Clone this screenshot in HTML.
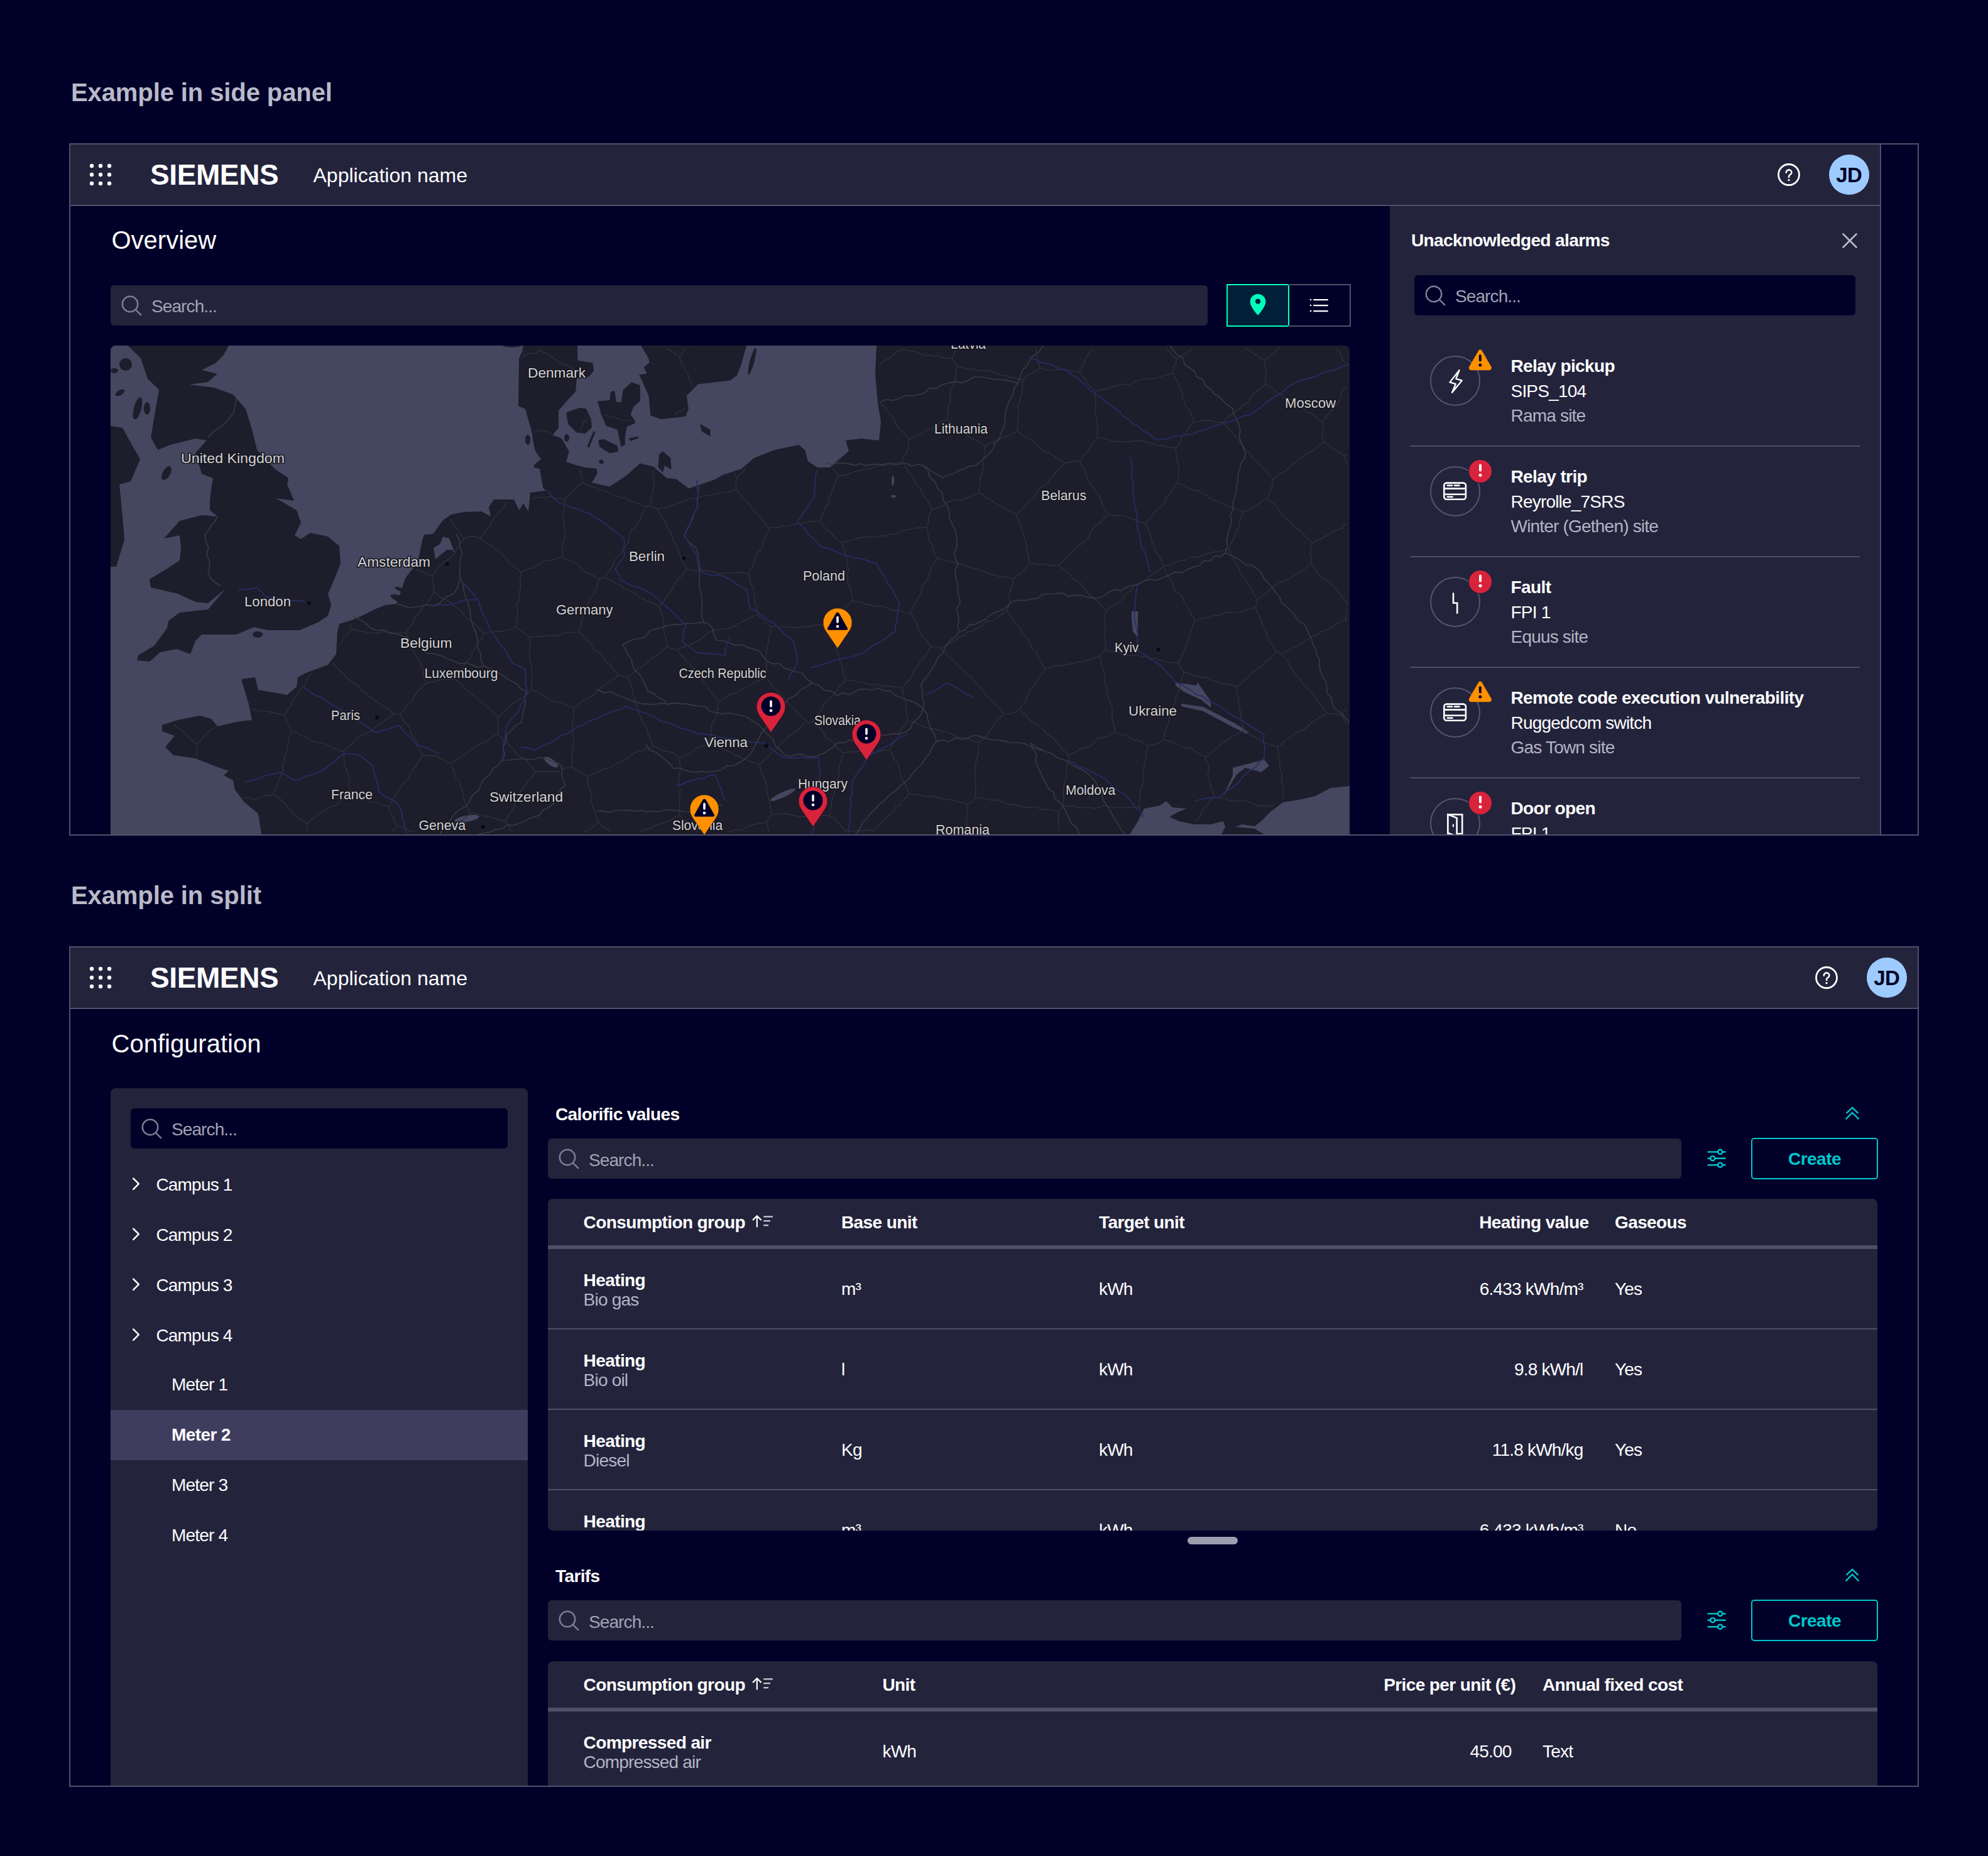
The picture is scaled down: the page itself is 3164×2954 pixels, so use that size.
<!DOCTYPE html>
<html><head><meta charset="utf-8"><title>iX examples</title>
<style>
html,body{margin:0;padding:0;background:#000028;}
body{width:3164px;height:2954px;position:relative;overflow:hidden;font-family:"Liberation Sans",sans-serif;}
.t{position:absolute;white-space:nowrap;}
.b{position:absolute;}
.frame{position:absolute;border:2px solid #50506c;overflow:hidden;background:#000028;}
.off{position:absolute;width:0;height:0;}
.clip{position:absolute;overflow:hidden;}
</style></head><body>
<div class="t" style="left:113.0px;top:126.6px;font-size:40px;line-height:40px;color:#b9b9c8;font-weight:700;letter-spacing:-0.1px;">Example in side panel</div><div class="t" style="left:113.0px;top:1404.6px;font-size:40px;line-height:40px;color:#b9b9c8;font-weight:700;letter-spacing:-0.1px;">Example in split</div><div class="frame" style="left:110px;top:228px;width:2940px;height:1098px;"><div class="off" style="left:-112px;top:-230px;"><div class="b" style="left:112.0px;top:230.0px;width:2880.0px;height:96.0px;background:#23233c;"></div><div class="b" style="left:112.0px;top:326.0px;width:2880.0px;height:2.0px;background:#50506c;"></div><svg class="b" style="left:141.9px;top:259.8px;" width="36" height="36" viewBox="0 0 36 36"><circle cx="4" cy="4" r="3.2" fill="#fff"/><circle cx="4" cy="18" r="3.2" fill="#fff"/><circle cx="4" cy="32" r="3.2" fill="#fff"/><circle cx="18" cy="4" r="3.2" fill="#fff"/><circle cx="18" cy="18" r="3.2" fill="#fff"/><circle cx="18" cy="32" r="3.2" fill="#fff"/><circle cx="32" cy="4" r="3.2" fill="#fff"/><circle cx="32" cy="18" r="3.2" fill="#fff"/><circle cx="32" cy="32" r="3.2" fill="#fff"/></svg><div class="t" style="left:239.0px;top:254.6px;font-size:46px;line-height:46px;color:#ffffff;font-weight:700;letter-spacing:-0.4px;">SIEMENS</div><div class="t" style="left:498.5px;top:263.2px;font-size:32px;line-height:32px;color:#ffffff;">Application name</div><div class="b" style="left:2911.0px;top:246.0px;width:64.0px;height:64.0px;background:#9dcbff;border-radius:50%;"></div><div class="t" style="left:2911.0px;top:262.1px;font-size:33px;line-height:33px;color:#000028;font-weight:700;letter-spacing:-0.6px;width:64px;text-align:center;text-indent:-0.6px;">JD</div><svg class="b" style="left:2825.3px;top:256.0px;" width="44" height="44" viewBox="0 0 44 44"><circle cx="22" cy="22" r="16.5" fill="none" stroke="#fff" stroke-width="2.8"/><path d="M17.8 18.8c0-2.6 1.9-4.4 4.3-4.4s4.3 1.8 4.3 4c0 2.1-1.4 2.9-2.7 3.9-1 .7-1.6 1.3-1.6 2.6v1.1" fill="none" stroke="#fff" stroke-width="2.6" stroke-linecap="round"/><circle cx="22" cy="30.6" r="1.7" fill="#fff"/></svg><div class="b" style="left:2992.0px;top:230.0px;width:2.0px;height:1100.0px;background:#50506c;"></div><div class="t" style="left:177.5px;top:362.2px;font-size:40px;line-height:40px;color:#ffffff;">Overview</div><div class="b" style="left:176.0px;top:454.0px;width:1746.0px;height:64.0px;background:#23233c;border-radius:6px;"></div><svg class="b" style="left:186.5px;top:464.0px;" width="40" height="40" viewBox="0 0 40 40"><circle cx="20" cy="20" r="12.2" fill="none" stroke="#7c7c92" stroke-width="2.6"/><line x1="28.8" y1="28.8" x2="37.2" y2="37.2" stroke="#7c7c92" stroke-width="2.6" stroke-linecap="round"/></svg><div class="t" style="left:241.0px;top:474.3px;font-size:28px;line-height:28px;color:#a3a3b4;letter-spacing:-0.9px;">Search...</div><div class="b" style="left:1952.0px;top:452.0px;width:100.0px;height:68.0px;background:#001f39;border:2px solid #00ffb9;box-sizing:border-box;"></div><div class="b" style="left:2050.0px;top:452.0px;width:100.0px;height:68.0px;border:2px solid #50506c;border-left:none;box-sizing:border-box;"></div><svg class="b" style="left:1980.0px;top:462.0px;" width="44" height="48" viewBox="0 0 44 48"><path d="M22 6c-7 0-12.4 5.4-12.4 12.2 0 7.6 10.6 19.6 12.4 21.6 1.8-2 12.4-14 12.4-21.6C34.4 11.4 29 6 22 6z" fill="#00ffb9"/><circle cx="22" cy="17.6" r="4.2" fill="#001f39"/></svg><svg class="b" style="left:2080.0px;top:470.0px;" width="40" height="32" viewBox="0 0 40 32"><g fill="#fff"><circle cx="6" cy="7" r="1.3"/><circle cx="6" cy="16" r="1.3"/><circle cx="6" cy="25" r="1.3"/><rect x="10" y="6" width="24" height="2.2" rx="1.1"/><rect x="10" y="15" width="24" height="2.2" rx="1.1"/><rect x="10" y="24" width="24" height="2.2" rx="1.1"/></g></svg><div class="b" style="left:176px;top:550px;width:1972px;height:780px;border-radius:8px 8px 0 0;overflow:hidden;"><svg width="1972" height="780" viewBox="176 550 1972 780" style="display:block"><rect x="176" y="550" width="1972" height="780" fill="#1e1d2b"/><path d="M176,550 L833,550 L831,560 L826,570 L825,646 L836,651 L846,686 L851,716 L861,731 L851,739 L849,744 L859,746 L864,776 L869,781 L844,784 L841,814 L833,801 L826,812 L818,795 L786,795 L778,807 L781,822 L766,814 L738,815 L718,819 L704,829 L690,849 L687,850 L675,851 L672,860 L666,890 L657,905 L645,920 L641,933 L631,961 L613,963 L598,969 L578,979 L560,987 L540,993 L537,1005 L535,1041 L522,1058 L487,1071 L474,1078 L472,1093 L457,1106 L411,1098 L406,1078 L384,1081 L396,1121 L401,1146 L376,1149 L346,1156 L336,1144 L318,1139 L283,1146 L258,1154 L258,1164 L278,1171 L263,1189 L276,1202 L311,1207 L341,1219 L364,1227 L356,1234 L371,1242 L374,1257 L389,1277 L411,1295 L416,1328 L176,1328Z" fill="#45465f"/><path d="M203,550 L364,550 L356,565 L343,578 L321,589 L346,595 L331,608 L301,612 L341,617 L371,628 L391,651 L401,683 L409,716 L437,746 L459,761 L457,771 L468,797 L439,793 L472,812 L479,832 L469,852 L479,858 L494,848 L522,854 L540,869 L542,897 L532,922 L522,945 L527,963 L522,980 L507,990 L477,1003 L427,1003 L404,998 L376,1010 L354,1010 L321,1010 L311,1020 L303,1041 L281,1033 L255,1038 L238,1053 L218,1051 L220,1043 L245,1028 L266,1000 L268,988 L286,975 L331,970 L359,937 L331,960 L311,958 L283,945 L240,935 L238,922 L266,905 L286,892 L288,872 L286,852 L261,857 L286,829 L321,820 L346,822 L334,812 L334,797 L336,779 L339,761 L321,754 L311,721 L329,701 L311,698 L271,708 L251,716 L240,696 L253,620 L235,603 L224,570Z" fill="#1e1d2b"/><path d="M176,678 L195,681 L210,708 L223,731 L208,766 L190,771 L195,822 L198,859 L185,902 L176,902Z" fill="#1e1d2b"/><ellipse cx="265" cy="753" rx="6" ry="12" transform="rotate(30 265 753)" fill="#1e1d2b"/><ellipse cx="410" cy="1010" rx="8" ry="5" transform="rotate(0 410 1010)" fill="#1e1d2b"/><ellipse cx="200" cy="580" rx="10" ry="10" transform="rotate(0 200 580)" fill="#1e1d2b"/><ellipse cx="219" cy="650" rx="6" ry="18" transform="rotate(15 219 650)" fill="#1e1d2b"/><ellipse cx="234" cy="650" rx="5" ry="10" transform="rotate(0 234 650)" fill="#1e1d2b"/><ellipse cx="191" cy="625" rx="8" ry="4" transform="rotate(-30 191 625)" fill="#1e1d2b"/><ellipse cx="182" cy="590" rx="6" ry="4" transform="rotate(0 182 590)" fill="#1e1d2b"/><ellipse cx="636" cy="953" rx="15" ry="5" transform="rotate(20 636 953)" fill="#1e1d2b"/><ellipse cx="637" cy="938" rx="9" ry="3" transform="rotate(20 637 938)" fill="#1e1d2b"/><ellipse cx="815" cy="547" rx="18" ry="6" transform="rotate(0 815 547)" fill="#1e1d2b"/><ellipse cx="840" cy="700" rx="4" ry="8" transform="rotate(0 840 700)" fill="#1e1d2b"/><path d="M919,550 L1395,550 L1393,595 L1397,641 L1402,671 L1399,701 L1371,698 L1346,701 L1351,718 L1341,726 L1321,744 L1301,744 L1286,734 L1281,716 L1271,708 L1233,716 L1200,729 L1180,746 L1150,756 L1136.5,763.8 L1095.8,777.4 L1076.2,762.3 L1061,760.8 L1040,742.7 L1018.8,737.4 L997.7,756.3 L970.5,774.4 L941.9,768.3 L950.9,753.2 L949.4,745.7 L932.8,744.2 L914.7,739.7 L901.1,735.1 L905.7,718.5 L893.6,697.4 L880,693 L880,691.4 L889,680.8 L889,653.6 L905.7,634 L916.2,623.5 L917.7,602.3 L937.3,599.3 L945,590.3 L943.4,577.4 L919.2,573.7Z" fill="#45465f"/><path d="M1020.3,550.3 L1032.4,570.7 L1034,576.7 L1024.9,584.2 L1029.4,594.8 L1017.3,596.3 L1032.4,629.5 L1035.4,661.2 L1052,667.2 L1091.3,662.7 L1095.8,650.6 L1092.8,629.5 L1110.9,611.4 L1162.2,605.4 L1172.7,597.8 L1180,579.7 L1188,550Z" fill="#1e1d2b"/><path d="M901.1,656.7 L922.3,649.1 L932.8,650.6 L940.4,665.7 L941.9,680.8 L931.3,689.9 L917.7,688.4 L904.1,674.8Z" fill="#1e1d2b"/><path d="M950.9,638.6 L970.5,637 L972,623.5 L978.1,622 L981.1,640.1 L988.6,640.1 L991.7,620.4 L1005.2,608.4 L1018.8,612.9 L1018.8,638.6 L1008.3,647.6 L1003.7,659.7 L1009.8,668.7 L1011.3,673.3 L997.7,679.3 L994.7,695.9 L994.7,708 L988.6,711 L982.6,683.8 L964.5,677.8 L957,659.7Z" fill="#1e1d2b"/><path d="M952.4,700.4 L961.5,698.9 L982.6,709.5 L984.1,718.5 L970.5,721.5 L953.9,711Z" fill="#1e1d2b"/><path d="M1000.7,697.4 L1015.8,694.4 L1015.8,697.4 L1003.7,701.9Z" fill="#1e1d2b"/><path d="M1113.9,674.8 L1130.5,683.8 L1130.5,694.4 L1116.9,686.8Z" fill="#1e1d2b"/><path d="M1049,723 L1055,718.5 L1067.1,729.1 L1068.6,747.2 L1058,741.2 L1055,751.7 L1047.5,744.2Z" fill="#1e1d2b"/><path d="M944.5,686 L947.5,688 L937.5,713 L934.5,711Z" fill="#1e1d2b"/><ellipse cx="1197" cy="575" rx="3.5" ry="22" transform="rotate(15 1197 575)" fill="#1e1d2b"/><ellipse cx="902" cy="697" rx="4" ry="6" transform="rotate(0 902 697)" fill="#1e1d2b"/><ellipse cx="957" cy="735" rx="4" ry="3" transform="rotate(20 957 735)" fill="#1e1d2b"/><path d="M693,890 L711,875 L720,875 L725,883 L715,857 L705,854 L700,866 L690,872Z" fill="#45465f"/><path d="M1798,1328 L1811,1307 L1821,1287 L1846,1282 L1856,1275 L1866,1285 L1889,1287 L1901,1282 L1876,1292 L1861,1300 L1876,1307 L1901,1312 L1927,1312 L1947,1307 L1952,1322 L1977,1312 L1997,1315 L2007,1307 L2022,1292 L2042,1277 L2072,1272 L2093,1267 L2118,1254 L2148,1251 L2148,1328Z" fill="#45465f"/><path d="M1944,1328 L1950,1316 L1977,1317 L1997,1319 L2012,1328Z" fill="#1e1d2b"/><path d="M1801,973 L1811,973 L1811,1015 L1803,1005 L1801,985Z" fill="#45465f"/><path d="M1871,1086 L1904,1091 L1906,1086 L1927,1116 L1927,1126 L1912,1114 L1884,1101 L1871,1091Z" fill="#45465f"/><path d="M1962,1222 L2012,1209 L2020,1219 L2007,1229 L1982,1222 L1969,1232 L1947,1267 L1962,1234Z" fill="#45465f"/><path d="M1880,1120 L1915,1125 L1963,1150 L1988,1165 L1984,1168 L1958,1155 L1915,1132 L1880,1124Z" fill="#45465f"/><ellipse cx="1246" cy="1265" rx="22" ry="4" transform="rotate(-25 1246 1265)" fill="#45465f"/><ellipse cx="743" cy="1303" rx="20" ry="5" transform="rotate(-10 743 1303)" fill="#45465f"/><ellipse cx="1421" cy="765" rx="2" ry="8" transform="rotate(0 1421 765)" fill="#45465f"/><ellipse cx="1422" cy="790" rx="4" ry="2" transform="rotate(0 1422 790)" fill="#45465f"/><ellipse cx="877" cy="1213" rx="13" ry="5" transform="rotate(35 877 1213)" fill="#45465f"/><g fill="none" stroke="#30313c" stroke-width="1.4" stroke-linejoin="round"><path d="M1081.3,567.5 L1083.5,575.1 L1087.5,581.9 L1089.9,589.4 L1095.2,595.6 L1096.2,603.7 L1100.9,610.2 L1102.0,614.6"/><path d="M1081.3,567.5 L1086.1,562.0 L1090.6,556.4 L1093.1,554.2"/><path d="M631.5,1314.3 L627.6,1320.2 L625.1,1324.0"/><path d="M631.5,1314.3 L628.0,1307.0 L625.2,1299.3 L621.0,1292.3 L618.7,1284.4"/><path d="M618.7,1284.4 L612.0,1281.9 L605.5,1279.1 L598.8,1276.6 L591.1,1277.0 L585.1,1272.5 L578.9,1268.6 L571.8,1267.4 L564.7,1266.2 L558.0,1263.8"/><path d="M558.0,1263.8 L551.8,1268.2 L545.3,1272.3 L539.6,1277.5 L533.7,1282.3 L525.9,1284.4 L519.3,1288.3 L512.5,1291.9 L506.4,1296.4 L500.6,1301.4 L494.6,1306.1 L488.7,1311.1"/><path d="M488.7,1311.1 L489.2,1318.2 L489.3,1324.0"/><path d="M660.1,1324.0 L659.4,1323.4 L651.7,1323.2 L645.6,1318.4 L638.6,1316.3 L631.5,1314.3"/><path d="M672.8,1201.6 L669.4,1195.1 L665.0,1189.1 L662.5,1182.0 L660.7,1174.5 L654.9,1169.3 L653.0,1161.9 L649.8,1155.2 L644.3,1149.8 L640.2,1143.6 L636.6,1137.2"/><path d="M672.8,1201.6 L669.0,1207.6 L664.8,1213.3 L661.9,1219.8 L656.6,1224.8 L653.3,1231.1 L650.7,1237.8 L645.3,1242.7 L641.0,1248.4 L637.2,1254.3 L633.0,1260.0 L629.8,1266.4 L625.3,1271.9 L622.6,1278.5 L618.7,1284.4"/><path d="M636.6,1137.2 L631.8,1136.9 L627.1,1136.6"/><path d="M546.3,1196.0 L551.8,1191.3 L557.3,1186.8 L562.2,1181.4 L567.2,1176.1 L572.3,1170.9 L579.9,1169.1 L586.0,1165.3 L593.1,1162.9 L597.7,1157.1 L603.6,1153.1 L609.5,1149.0 L615.2,1144.7 L621.0,1140.4 L627.1,1136.6"/><path d="M546.3,1196.0 L547.5,1203.5 L547.3,1211.3 L548.9,1218.8 L552.0,1226.0 L554.4,1233.4 L556.5,1240.8 L555.3,1248.7 L557.4,1256.1 L558.0,1263.8"/><path d="M435.5,1264.4 L437.7,1257.6 L440.3,1251.1 L443.1,1244.5 L445.5,1237.9 L448.5,1231.4 L450.9,1224.8 L449.9,1217.2 L453.3,1210.8 L452.8,1203.4 L455.8,1196.9 L457.6,1190.1 L458.6,1183.1 L459.7,1176.1 L461.9,1169.4 L463.9,1162.6"/><path d="M435.5,1264.4 L441.0,1268.9 L447.1,1272.7 L452.0,1277.9 L457.1,1282.8 L461.2,1288.9 L465.4,1294.8 L471.1,1299.1 L476.5,1303.6 L483.1,1306.8 L488.7,1311.1"/><path d="M546.3,1196.0 L539.2,1193.8 L532.2,1191.3 L525.3,1188.6 L519.1,1184.2 L511.9,1182.2 L504.1,1181.8 L496.9,1179.8 L490.9,1174.9 L484.0,1172.2 L477.2,1169.3 L470.9,1165.2 L463.9,1162.6"/><path d="M672.8,1201.6 L680.6,1202.5 L688.5,1202.8 L696.3,1203.8 L703.1,1207.9 L709.8,1212.2 L717.0,1214.9"/><path d="M708.9,1324.0 L711.8,1321.7 L718.0,1317.2 L722.9,1311.2 L730.5,1308.5 L737.1,1304.6 L742.7,1299.5 L748.2,1294.1"/><path d="M717.0,1214.9 L719.5,1221.6 L723.0,1227.8 L723.9,1235.1 L728.5,1240.9 L732.7,1246.8 L733.6,1254.1 L736.4,1260.6 L737.5,1267.8 L739.4,1274.7 L741.9,1281.3 L745.1,1287.7 L748.2,1294.1"/><path d="M627.1,1136.6 L621.8,1131.7 L616.1,1127.2 L609.9,1123.5 L603.9,1119.4 L597.8,1115.4 L592.2,1110.8 L585.8,1107.2 L581.1,1101.5 L574.4,1098.3 L570.3,1092.0 L564.6,1087.5 L558.3,1083.8 L552.4,1079.6 L548.1,1073.5 L542.3,1069.1 L537.6,1063.5 L532.4,1058.4 L528.9,1055.6"/><path d="M463.9,1162.6 L459.5,1154.8 L455.8,1146.7 L452.7,1138.3"/><path d="M452.7,1138.3 L456.4,1131.9 L461.0,1126.2 L464.0,1119.3 L466.9,1112.5 L472.4,1107.3 L475.9,1100.8 L479.9,1094.7 L485.7,1089.8 L488.3,1082.7 L491.3,1075.8 L496.5,1071.7"/><path d="M2039.3,1040.6 L2045.9,1037.7 L2052.0,1033.5 L2058.4,1030.1 L2065.5,1028.0 L2071.8,1024.3 L2077.8,1020.1 L2083.8,1016.0 L2089.7,1011.5 L2097.5,1010.7 L2102.9,1005.3 L2109.8,1002.9 L2117.0,1000.8 L2122.6,996.0 L2128.7,992.0 L2135.3,988.8 L2141.9,985.8"/><path d="M2039.3,1040.6 L2044.0,1046.4 L2048.7,1052.1 L2052.1,1058.9 L2056.1,1065.2 L2060.3,1071.3 L2065.0,1077.1 L2070.3,1082.4 L2073.6,1089.2 L2080.1,1093.5 L2084.3,1099.7 L2089.6,1105.0 L2094.2,1110.8 L2097.4,1117.7 L2103.2,1122.7 L2107.4,1128.8 L2112.0,1134.7"/><path d="M2134.5,1138.2 L2127.1,1136.5 L2119.4,1136.3 L2112.0,1134.7"/><path d="M2134.5,1138.2 L2138.9,1132.6 L2144.0,1127.9"/><path d="M2144.0,988.5 L2141.9,985.8"/><path d="M2144.0,1155.3 L2142.0,1152.0 L2138.9,1144.7 L2134.5,1138.2"/><path d="M1059.1,554.2 L1063.1,555.8 L1069.5,559.0 L1075.3,563.5 L1081.3,567.5"/><path d="M1187.6,744.8 L1187.5,744.9 L1183.1,750.4 L1177.6,755.0 L1172.9,760.3"/><path d="M1168.8,753.9 L1169.0,754.3 L1172.9,760.3"/><path d="M1224.1,841.0 L1231.5,839.3 L1239.1,839.5 L1246.3,837.1 L1254.0,837.9 L1261.1,834.9 L1268.5,833.8 L1276.0,833.2 L1283.3,830.9 L1290.7,829.9 L1298.3,830.0 L1305.7,829.2"/><path d="M1224.1,841.0 L1219.7,835.2 L1215.3,829.2 L1209.8,824.3 L1205.8,818.1 L1200.1,813.3 L1195.4,807.6 L1192.3,800.6 L1186.1,796.3 L1180.2,791.7 L1176.5,785.2 L1171.7,779.7"/><path d="M1325.1,745.7 L1325.3,745.9 L1330.5,751.6 L1333.6,758.2"/><path d="M1333.6,758.2 L1330.9,765.3 L1328.3,772.5 L1324.4,779.1 L1322.6,786.7 L1318.7,793.3 L1318.6,801.5 L1313.7,807.8 L1310.7,814.8 L1307.9,821.9 L1305.7,829.2"/><path d="M1171.7,779.7 L1171.0,769.9 L1172.9,760.3"/><path d="M1435.9,554.0 L1436.1,555.7"/><path d="M1436.1,555.7 L1429.7,558.9 L1423.6,562.7 L1418.2,567.6 L1412.5,572.0 L1406.1,575.2 L1400.6,579.9 L1397.6,580.8"/><path d="M770.4,1008.1 L767.1,1014.5 L763.0,1020.4 L759.1,1026.4 L755.3,1032.5 L752.1,1038.9 L749.3,1045.7 L745.0,1051.4 L739.3,1056.3 L736.9,1063.3 L732.4,1068.9 L728.6,1075.0 L724.1,1080.6"/><path d="M770.4,1008.1 L764.8,1003.2 L759.7,997.7 L754.7,992.1 L748.8,987.5 L742.8,983.1 L737.5,977.8 L732.9,971.7 L726.9,967.3 L721.3,962.3 L715.5,957.7 L708.5,954.4 L701.7,950.9 L695.8,946.4 L690.5,941.2"/><path d="M646.2,1007.1 L649.0,1013.8 L651.7,1020.5 L655.8,1026.6 L656.2,1034.3 L660.1,1040.5 L663.9,1046.8 L668.3,1052.8 L670.8,1059.6 L673.2,1066.5 L673.8,1074.0 L675.8,1081.0 L678.6,1087.7"/><path d="M646.2,1007.1 L649.9,1000.8 L654.5,995.2 L657.9,988.8 L660.6,981.9 L665.8,976.8 L670.2,971.0 L673.8,964.7 L679.7,960.0 L684.0,954.2 L687.5,947.9 L690.5,941.2"/><path d="M678.6,1087.7 L685.9,1084.6 L693.7,1084.8 L700.9,1081.3 L708.5,1080.5 L716.4,1081.1 L724.1,1080.6"/><path d="M636.6,1137.2 L641.4,1131.8 L645.5,1125.8 L648.9,1119.3 L656.0,1115.8 L658.6,1108.5 L663.2,1103.0 L667.7,1097.3 L673.3,1092.6 L678.6,1087.7"/><path d="M558.7,1001.6 L554.3,1007.9 L549.1,1013.4 L544.7,1019.7 L540.8,1026.3 L539.8,1027.1"/><path d="M558.7,1001.6 L566.0,1002.8 L573.2,1004.1 L580.4,1005.6 L587.7,1007.5 L595.0,1007.6 L602.3,1007.7 L609.8,1005.1 L617.0,1006.1 L624.3,1007.1 L631.6,1007.4 L638.9,1007.1 L646.2,1007.1"/><path d="M557.7,991.9 L557.9,994.4 L558.7,1001.6"/><path d="M687.7,916.4 L680.8,914.0 L674.0,910.8 L667.1,908.2 L661.3,905.6"/><path d="M687.7,916.4 L689.3,924.6 L690.2,932.9 L690.5,941.2"/><path d="M843.3,1014.6 L836.7,1008.4 L828.5,1004.0 L821.8,997.9"/><path d="M843.3,1014.6 L844.2,1022.1 L843.3,1029.7 L842.8,1037.2 L842.5,1044.8 L844.0,1052.2 L845.7,1059.7 L846.3,1067.2 L846.7,1074.7 L846.1,1082.3 L846.3,1089.8 L846.6,1097.3"/><path d="M821.8,997.9 L814.6,1000.3 L807.4,1002.3 L800.2,1004.7 L792.6,1004.6 L785.1,1005.4 L777.7,1006.4 L770.4,1008.1"/><path d="M724.1,1080.6 L729.4,1085.3 L734.8,1089.9 L739.7,1095.0 L744.5,1100.2 L750.2,1104.4 L755.5,1109.2 L761.1,1113.4 L766.8,1117.7 L772.3,1122.2 L777.5,1127.0 L782.7,1131.7 L787.7,1136.8 L793.1,1141.4"/><path d="M846.6,1097.3 L840.9,1102.5 L835.7,1108.3 L828.5,1111.6 L822.5,1116.5 L815.5,1120.1 L810.6,1126.4 L804.3,1130.8 L798.4,1135.8 L793.1,1141.4"/><path d="M717.0,1214.9 L723.2,1210.9 L729.9,1207.8 L735.1,1202.3 L742.5,1200.2 L747.3,1194.1 L754.1,1191.0 L759.6,1186.0 L766.2,1182.7 L773.6,1180.6 L779.0,1175.4 L785.6,1172.2 L791.7,1168.0"/><path d="M793.1,1141.4 L792.0,1150.2 L793.9,1159.2 L791.7,1168.0"/><path d="M314.1,1184.2 L312.9,1191.9 L313.0,1199.7 L312.8,1203.4"/><path d="M314.1,1184.2 L308.1,1179.9 L302.5,1175.2 L297.2,1170.1 L292.2,1164.5 L285.9,1160.7 L280.1,1156.2 L276.2,1152.4"/><path d="M342.4,1158.0 L342.0,1158.2 L334.7,1161.7 L329.8,1167.6 L323.8,1172.3 L319.1,1178.4 L314.1,1184.2"/><path d="M401.5,1128.3 L402.5,1128.5 L409.5,1130.9 L416.7,1131.9 L424.1,1132.0 L431.3,1133.5 L438.4,1135.2 L445.7,1136.2 L452.7,1138.3"/><path d="M435.5,1264.4 L428.2,1265.7 L420.9,1266.8 L413.9,1269.9 L406.7,1272.2 L399.0,1270.9 L391.3,1269.8 L388.5,1269.7"/><path d="M1224.1,841.0 L1221.7,847.9 L1218.3,854.2 L1214.8,860.6 L1213.6,867.9 L1211.3,874.8 L1205.3,880.0 L1201.4,886.1 L1201.0,893.8 L1198.4,900.6 L1194.7,906.8 L1191.5,913.3"/><path d="M1226.4,996.7 L1220.4,992.9 L1216.1,987.3 L1210.6,982.8 L1206.1,977.3"/><path d="M1226.4,996.7 L1233.7,997.4 L1240.9,998.4 L1248.1,997.2 L1255.3,998.3 L1262.5,998.7 L1269.8,999.2 L1276.9,997.4 L1284.1,997.5 L1291.3,997.2 L1298.5,994.5 L1305.7,994.3 L1312.9,994.3 L1320.1,994.6"/><path d="M1191.5,913.3 L1193.2,920.4 L1194.1,927.7 L1198.0,934.3 L1199.8,941.3 L1201.5,948.4 L1200.8,956.1 L1203.2,963.0 L1203.8,970.4 L1206.1,977.3"/><path d="M1340.2,863.8 L1333.5,859.0 L1327.2,853.8 L1321.9,847.6 L1315.1,842.9 L1310.0,836.5 L1305.7,829.2"/><path d="M1340.2,863.8 L1342.2,870.8 L1344.3,877.8 L1347.0,884.7 L1348.0,891.8 L1348.9,899.1 L1350.8,906.1 L1349.0,913.8 L1349.0,921.2 L1349.4,928.5 L1352.6,935.2 L1355.1,942.2 L1356.1,949.4 L1357.8,956.4"/><path d="M1357.8,956.4 L1351.5,961.0 L1346.3,966.6 L1339.3,970.5 L1335.8,977.8 L1330.2,983.0 L1324.5,988.1 L1320.1,994.6"/><path d="M1812.7,1285.1 L1805.6,1285.3 L1798.5,1284.9 L1791.4,1285.1 L1784.3,1285.9 L1777.2,1285.3 L1770.1,1284.5 L1763.0,1283.6 L1755.9,1282.2 L1748.7,1285.3 L1741.6,1286.6 L1734.5,1284.6 L1727.4,1285.3 L1720.2,1285.7 L1713.2,1284.2 L1706.1,1282.7 L1698.9,1283.4 L1691.8,1283.1"/><path d="M1812.7,1285.1 L1813.4,1278.0 L1814.4,1270.9 L1814.0,1263.7 L1814.7,1256.6 L1818.2,1250.0 L1820.3,1243.1 L1819.2,1235.8 L1818.5,1228.5 L1820.5,1221.6 L1821.6,1214.6 L1823.6,1207.7 L1824.0,1200.6 L1825.7,1193.6 L1826.9,1186.6"/><path d="M1826.9,1186.6 L1819.7,1183.2 L1813.0,1178.7 L1804.7,1178.0 L1797.8,1173.9 L1791.2,1169.4 L1782.8,1168.7 L1775.6,1165.4"/><path d="M1775.6,1165.4 L1768.5,1168.0 L1762.2,1172.3 L1754.5,1173.8 L1746.9,1175.5 L1741.7,1182.1 L1736.0,1187.5 L1728.5,1189.3 L1721.0,1191.2 L1714.4,1194.9 L1707.8,1198.5 L1700.9,1201.6"/><path d="M1700.9,1201.6 L1700.5,1209.1 L1698.4,1216.3 L1696.5,1223.6 L1697.7,1231.2 L1696.8,1238.6 L1694.5,1245.9 L1693.0,1253.2 L1692.5,1260.6 L1692.8,1268.2 L1692.7,1275.7 L1691.8,1283.1"/><path d="M1815.9,1288.3 L1812.7,1285.1"/><path d="M1686.0,1324.0 L1685.2,1320.2 L1684.4,1313.1 L1684.8,1305.9 L1684.5,1298.8 L1684.5,1291.6"/><path d="M1684.5,1291.6 L1688.5,1287.7 L1691.8,1283.1"/><path d="M1622.7,1128.8 L1626.7,1122.3 L1632.0,1116.6 L1634.9,1109.4 L1638.3,1102.5 L1641.2,1095.3 L1646.9,1089.8 L1650.9,1083.3 L1654.7,1076.6 L1659.7,1070.8 L1663.4,1064.1"/><path d="M1622.7,1128.8 L1627.9,1133.7 L1633.2,1138.4 L1637.6,1144.1 L1643.1,1148.7 L1649.4,1152.4 L1654.8,1157.0 L1660.5,1161.4 L1664.9,1167.0 L1670.4,1171.6 L1676.7,1175.3 L1681.2,1180.9 L1686.2,1186.1 L1690.5,1191.9 L1695.6,1196.9 L1700.9,1201.6"/><path d="M1663.4,1064.1 L1670.6,1062.2 L1677.7,1059.8 L1685.3,1059.8 L1692.7,1058.7 L1700.0,1057.2 L1707.4,1056.2 L1714.4,1053.7 L1722.0,1053.5 L1729.1,1051.5 L1736.3,1049.4 L1743.2,1046.5 L1750.2,1043.9"/><path d="M1750.2,1043.9 L1752.2,1050.9 L1753.0,1058.3 L1755.6,1065.2 L1758.2,1072.1 L1758.1,1079.6 L1758.1,1087.0 L1761.8,1093.7 L1760.7,1101.4 L1763.6,1108.3 L1765.6,1115.3 L1768.8,1122.1 L1770.3,1129.2 L1770.0,1136.7 L1770.1,1144.2 L1772.3,1151.2 L1773.7,1158.3 L1775.6,1165.4"/><path d="M1622.7,1128.8 L1614.9,1133.3 L1606.7,1136.4 L1597.5,1135.9"/><path d="M1597.5,1135.9 L1592.3,1141.3 L1586.8,1146.4 L1581.9,1152.0 L1579.2,1159.5 L1573.8,1164.8 L1570.2,1171.4 L1563.5,1175.6 L1558.9,1181.5"/><path d="M1684.5,1291.6 L1677.5,1290.7 L1670.6,1288.8 L1663.5,1288.5 L1656.4,1287.7 L1649.8,1284.5 L1642.6,1284.5 L1635.3,1285.3 L1628.3,1284.0 L1621.4,1282.4 L1614.4,1280.8 L1607.3,1280.8 L1600.5,1278.2 L1593.8,1275.5 L1587.0,1273.0 L1579.6,1274.3 L1572.8,1272.2 L1565.8,1270.6 L1558.8,1269.7 L1551.7,1269.0"/><path d="M1551.7,1269.0 L1552.5,1261.8 L1553.1,1254.5 L1552.1,1247.0 L1551.3,1239.6 L1552.2,1232.3 L1552.5,1225.0 L1552.4,1217.7 L1553.9,1210.4 L1556.2,1203.3 L1556.6,1196.0 L1557.6,1188.7 L1558.9,1181.5"/><path d="M2027.4,1283.0 L2022.8,1282.4 L2015.6,1282.6 L2008.5,1282.3 L2001.3,1282.6 L1994.7,1279.1 L1987.9,1277.2 L1981.2,1274.0 L1974.1,1273.4 L1966.7,1275.2 L1959.7,1274.3 L1952.8,1272.4 L1945.9,1270.9 L1938.9,1269.8 L1932.0,1268.1"/><path d="M1932.0,1268.1 L1927.0,1273.3 L1923.1,1279.3 L1918.1,1284.6 L1913.4,1290.1 L1910.8,1297.2 L1907.3,1303.6 L1902.8,1308.0"/><path d="M2033.4,1188.3 L2034.5,1195.3 L2034.8,1202.4 L2036.0,1209.4 L2036.8,1216.4 L2037.2,1223.5 L2040.1,1230.3 L2040.7,1237.4 L2038.8,1244.7 L2041.8,1251.5 L2042.9,1258.5 L2042.1,1265.7 L2042.9,1272.7 L2042.9,1272.8"/><path d="M2033.4,1188.3 L2039.5,1184.3 L2044.9,1179.3 L2050.8,1175.0 L2057.1,1171.1 L2062.6,1166.3 L2069.7,1163.7 L2076.3,1160.3 L2082.0,1155.7 L2087.2,1150.3 L2093.2,1146.2 L2099.4,1142.2 L2106.1,1139.0 L2112.0,1134.7"/><path d="M1436.1,555.7 L1443.1,557.9 L1450.3,558.7 L1457.6,559.8 L1464.3,563.1 L1471.2,566.0 L1478.9,564.6 L1485.9,566.7 L1493.4,566.2 L1500.3,569.0 L1507.5,570.1 L1514.8,570.4"/><path d="M1522.1,554.0 L1520.4,557.5 L1517.6,564.0 L1514.8,570.4"/><path d="M1507.0,667.7 L1500.1,670.7 L1493.7,674.7 L1487.5,679.1 L1481.0,683.0 L1473.4,684.7 L1467.7,690.1 L1460.8,693.2 L1453.5,695.6 L1447.1,699.5"/><path d="M1507.0,667.7 L1512.9,672.3 L1518.5,677.1 L1524.2,681.9 L1529.3,687.6 L1536.4,690.3 L1542.3,694.8 L1548.3,699.2 L1555.3,701.9 L1561.9,705.5 L1567.9,709.7"/><path d="M1567.9,709.7 L1568.1,717.4 L1565.9,724.7 L1565.8,732.2 L1564.1,739.6 L1565.3,747.4 L1561.9,754.5 L1559.8,761.8 L1560.0,769.4 L1558.1,776.8 L1557.8,784.3"/><path d="M1435.5,734.7 L1439.9,740.8 L1443.7,747.3 L1447.5,753.8 L1453.1,759.1 L1455.5,766.6 L1459.9,772.7 L1465.6,777.9 L1467.9,785.4 L1472.3,791.5 L1476.4,797.8 L1480.4,804.2 L1483.7,811.0"/><path d="M1435.5,734.7 L1438.0,727.7 L1442.0,721.3 L1444.9,714.4 L1445.8,706.9 L1447.1,699.5"/><path d="M1557.8,784.3 L1551.3,787.4 L1544.5,789.8 L1538.1,793.1 L1531.6,796.0 L1523.8,795.6 L1516.6,796.8 L1509.6,798.4 L1503.6,802.9 L1497.4,806.8 L1490.5,808.7 L1483.7,811.0"/><path d="M1401.2,642.1 L1402.1,643.8 L1408.5,648.0 L1411.4,654.7 L1417.1,659.4 L1421.2,665.3 L1424.5,671.7 L1428.1,678.0 L1432.5,683.7 L1438.1,688.4 L1442.8,693.8 L1447.1,699.5"/><path d="M1514.8,570.4 L1519.3,576.8 L1523.1,583.7"/><path d="M1523.1,583.7 L1521.7,590.7 L1521.4,597.8 L1520.9,605.0 L1517.8,611.7 L1514.7,618.4 L1511.7,625.0 L1513.0,632.6 L1512.0,639.6 L1509.5,646.4 L1509.4,653.7 L1508.1,660.7 L1507.0,667.7"/><path d="M1333.6,758.2 L1341.0,756.7 L1348.4,755.7 L1355.3,752.6 L1362.4,749.8 L1369.8,748.9 L1376.8,745.9 L1384.6,746.5 L1391.5,743.4 L1398.5,740.4 L1406.2,740.6 L1413.8,740.2 L1420.9,737.9 L1428.2,736.2 L1435.5,734.7"/><path d="M1340.2,863.8 L1347.2,861.8 L1354.2,859.9 L1361.1,857.6 L1368.0,855.7 L1375.1,854.6 L1382.5,854.7 L1389.8,854.9 L1396.9,853.8 L1404.1,853.0 L1411.3,852.2 L1418.2,849.9 L1425.5,850.1 L1432.3,847.4 L1439.1,844.3 L1446.1,842.6 L1453.2,841.6 L1460.3,840.2 L1467.6,840.0 L1474.7,838.8"/><path d="M1474.7,838.8 L1477.5,832.1 L1477.8,824.5 L1479.4,817.3 L1483.7,811.0"/><path d="M860.8,554.0 L859.7,557.8"/><path d="M927.4,596.8 L926.7,596.4 L920.7,592.7 L914.2,589.8 L909.2,584.5 L902.8,581.5 L895.8,579.7 L889.4,576.6 L883.9,572.1 L878.4,567.6 L872.6,563.6 L866.1,560.9 L859.7,557.8"/><path d="M1191.5,913.3 L1184.5,912.2 L1177.5,911.0 L1170.4,911.4 L1163.3,912.0 L1156.3,911.6 L1149.1,912.9 L1142.0,912.9 L1135.2,909.7 L1128.2,908.1 L1121.2,907.7 L1114.1,908.3 L1107.0,908.6 L1100.0,907.2 L1093.0,906.5"/><path d="M1206.1,977.3 L1199.8,980.3 L1193.4,983.4 L1187.1,986.6 L1181.0,990.1 L1174.4,992.7 L1168.6,997.0 L1162.2,999.6 L1154.8,1000.4 L1147.6,1001.5 L1140.4,1002.5 L1133.7,1004.7 L1127.0,1007.0 L1121.4,1011.6 L1115.9,1016.8 L1109.8,1020.3 L1103.4,1023.3 L1097.2,1026.6 L1090.2,1028.3 L1083.8,1031.1 L1077.2,1033.6"/><path d="M1077.2,1033.6 L1069.3,1032.5 L1061.8,1029.8"/><path d="M1061.8,1029.8 L1061.6,1022.4 L1059.2,1015.5 L1057.1,1008.6 L1056.0,1001.4 L1056.9,993.8 L1055.4,986.7 L1054.3,979.5 L1051.1,972.8 L1048.8,965.8"/><path d="M1093.0,906.5 L1088.4,912.4 L1083.3,917.8 L1077.9,922.9 L1073.6,929.0 L1070.9,936.2 L1067.4,942.8 L1061.3,947.5 L1058.4,954.5 L1053.7,960.3 L1048.8,965.8"/><path d="M1171.7,779.7 L1164.7,781.4 L1157.7,782.9 L1150.7,784.1 L1143.5,784.7 L1136.5,786.4 L1129.7,788.5 L1122.4,788.6 L1115.4,790.3 L1108.7,792.7 L1101.4,793.1 L1094.5,794.8 L1088.2,799.2 L1081.0,799.9 L1074.5,803.1 L1067.7,805.5 L1060.8,807.3 L1053.8,808.6 L1046.9,810.6"/><path d="M1093.0,906.5 L1090.0,900.1 L1086.2,894.0 L1083.8,887.4 L1081.6,880.5 L1078.9,873.9 L1076.9,867.0 L1071.8,861.6 L1070.6,854.3 L1067.5,847.9 L1063.1,842.2 L1060.5,835.5 L1058.0,828.9 L1054.1,822.9 L1050.0,817.0 L1046.9,810.6"/><path d="M748.2,1294.1 L755.5,1294.7 L762.6,1295.9 L769.4,1298.3 L776.6,1299.2 L783.5,1301.6 L790.6,1302.9 L797.3,1306.0 L804.5,1306.9"/><path d="M791.7,1168.0 L796.7,1173.0 L801.5,1178.3 L807.6,1182.2 L812.2,1187.7 L817.7,1192.2 L820.9,1199.0 L827.0,1202.9 L833.4,1206.6 L838.8,1211.2 L843.1,1216.9 L847.6,1222.4 L851.8,1228.2"/><path d="M851.8,1228.2 L847.9,1234.1 L844.4,1240.2 L839.3,1245.4 L835.4,1251.3 L830.8,1256.8 L826.4,1262.4 L823.8,1269.1 L821.2,1275.7 L818.8,1282.6 L816.3,1289.3 L811.3,1294.5 L808.1,1300.9 L804.5,1306.9"/><path d="M813.2,1324.0 L812.6,1322.6 L809.8,1314.1 L804.5,1306.9"/><path d="M1040.0,1187.2 L1037.2,1180.4 L1033.9,1173.8 L1030.7,1167.1 L1030.0,1159.5 L1025.7,1153.2 L1021.7,1146.9 L1019.2,1140.0 L1016.3,1133.2 L1015.5,1125.6 L1011.7,1119.2 L1010.5,1111.8 L1007.9,1104.9 L1006.5,1097.6 L1004.1,1090.6 L1001.8,1083.6 L999.1,1076.8"/><path d="M1040.0,1187.2 L1033.2,1189.9 L1026.3,1192.2 L1019.7,1195.3 L1012.7,1197.4 L1006.2,1200.8 L1000.7,1206.1 L994.2,1209.4 L987.9,1213.1 L980.8,1215.0 L974.6,1219.0 L968.5,1223.0 L960.7,1223.6 L954.7,1227.9 L947.5,1229.6 L940.9,1232.8 L934.4,1236.0"/><path d="M934.4,1236.0 L926.7,1230.7 L918.6,1226.1 L910.7,1221.2"/><path d="M910.7,1221.2 L910.3,1213.9 L910.9,1206.6 L909.5,1199.2 L911.9,1192.0 L911.4,1184.6 L913.7,1177.4 L911.8,1170.0 L910.0,1162.6 L911.7,1155.4 L911.3,1148.0 L913.0,1140.7 L913.3,1133.4 L913.1,1126.1"/><path d="M913.1,1126.1 L919.2,1122.0 L925.0,1117.5 L931.4,1113.8 L937.6,1109.9 L944.2,1106.5 L949.5,1101.3 L954.9,1096.2 L960.5,1091.4 L967.0,1087.8 L972.5,1082.8 L979.2,1079.6 L985.0,1075.1"/><path d="M985.0,1075.1 L992.0,1076.2 L999.1,1076.8"/><path d="M952.1,1309.2 L946.6,1313.7 L940.9,1317.8 L935.3,1322.1 L929.5,1324.0"/><path d="M952.1,1309.2 L949.5,1302.1 L948.3,1294.6 L944.6,1287.8 L942.9,1280.4 L940.7,1273.2 L942.3,1265.1 L939.6,1258.0 L936.5,1251.0 L935.6,1243.4 L934.4,1236.0"/><path d="M851.8,1228.2 L859.2,1227.9 L866.7,1227.6 L874.2,1228.2 L881.7,1228.5 L889.1,1227.3 L896.0,1223.1 L903.4,1222.3 L910.7,1221.2"/><path d="M846.6,1097.3 L853.1,1100.5 L859.4,1104.3 L866.0,1107.1 L871.9,1111.9 L878.2,1115.5 L885.3,1117.3 L893.1,1117.5 L899.4,1121.4 L906.0,1124.2 L913.1,1126.1"/><path d="M920.9,1005.9 L913.8,1006.3 L906.7,1006.8 L899.7,1007.6 L892.8,1009.9 L885.9,1012.0 L878.7,1011.9 L871.5,1011.1 L864.6,1013.7 L857.3,1012.4 L850.3,1013.5 L843.3,1014.6"/><path d="M920.9,1005.9 L926.3,1010.7 L931.5,1015.8 L936.8,1020.8 L941.1,1026.7 L944.6,1033.4 L950.8,1037.5 L957.4,1041.3 L960.2,1048.5 L965.8,1053.2 L971.1,1058.2 L975.4,1064.2 L980.2,1069.6 L985.0,1075.1"/><path d="M1918.4,1204.7 L1924.7,1200.8 L1930.0,1195.5 L1936.4,1191.6 L1941.6,1186.0 L1947.3,1181.3 L1954.0,1178.0 L1959.4,1172.8 L1966.3,1169.7 L1972.8,1166.0 L1979.3,1162.5"/><path d="M1918.4,1204.7 L1911.9,1201.7 L1905.7,1197.8 L1899.5,1193.8 L1893.2,1190.2 L1885.2,1190.5 L1878.8,1187.0 L1872.4,1183.6 L1865.5,1181.5 L1858.7,1179.0 L1851.7,1177.1"/><path d="M1851.7,1177.1 L1853.2,1170.2 L1854.3,1163.2 L1857.0,1156.7 L1859.8,1150.2 L1860.8,1143.2 L1862.0,1136.2 L1866.9,1130.4 L1867.2,1123.1 L1870.4,1116.7 L1871.5,1109.8 L1874.6,1103.4 L1877.4,1096.9 L1878.6,1089.9 L1880.0,1083.0 L1882.3,1076.4 L1884.7,1069.8"/><path d="M1979.3,1162.5 L1977.9,1155.6 L1976.8,1148.6 L1975.1,1141.7 L1974.7,1134.7 L1972.8,1127.8 L1971.1,1121.0 L1971.6,1113.8 L1969.5,1107.0 L1968.8,1100.0 L1968.1,1092.9"/><path d="M1968.1,1092.9 L1961.3,1090.5 L1954.2,1089.0 L1946.9,1088.3 L1940.1,1085.9 L1933.1,1084.1 L1926.1,1082.3 L1919.9,1077.6 L1912.3,1078.4 L1905.4,1076.0 L1898.2,1075.0 L1891.7,1071.6 L1884.7,1069.8"/><path d="M2033.4,1188.3 L2026.2,1185.9 L2018.9,1183.9 L2011.4,1182.3 L2005.1,1178.0 L1998.9,1173.5 L1991.9,1170.8 L1986.1,1165.6 L1979.3,1162.5"/><path d="M1932.0,1268.1 L1930.8,1261.0 L1928.1,1254.2 L1925.7,1247.3 L1924.4,1240.3 L1922.1,1233.4 L1923.7,1225.7 L1923.2,1218.4 L1919.7,1211.8 L1918.4,1204.7"/><path d="M1826.9,1186.6 L1835.8,1185.2 L1844.3,1182.6 L1851.7,1177.1"/><path d="M1875.8,1055.3 L1879.1,1063.3 L1884.7,1069.8"/><path d="M1875.8,1055.3 L1868.4,1054.6 L1860.9,1054.2 L1853.7,1052.6 L1846.4,1051.1 L1839.4,1048.1 L1831.9,1048.0 L1825.0,1044.2 L1817.1,1046.2 L1810.3,1042.3 L1802.5,1043.7 L1795.0,1043.3 L1787.9,1041.0 L1780.8,1038.3 L1773.5,1037.1 L1766.1,1036.2 L1758.9,1034.5"/><path d="M1758.9,1034.5 L1754.6,1039.2 L1750.2,1043.9"/><path d="M2031.9,1038.5 L2025.9,1043.2 L2020.9,1049.1 L2014.2,1053.0 L2008.8,1058.4 L2003.4,1063.8 L1996.6,1067.6 L1990.4,1072.1 L1986.2,1078.9 L1979.5,1082.8 L1974.2,1088.4 L1968.1,1092.9"/><path d="M2031.9,1038.5 L2036.0,1038.0 L2039.3,1040.6"/><path d="M1648.5,554.0 L1648.9,557.2 L1649.5,564.5 L1651.5,571.4 L1653.1,578.5 L1654.9,585.4"/><path d="M1523.1,583.7 L1530.2,584.6 L1537.1,586.3 L1544.1,587.6 L1551.4,587.3 L1558.0,590.3 L1565.4,589.8 L1572.6,589.7 L1579.4,591.8 L1586.1,594.7 L1592.8,597.2 L1600.0,597.5 L1606.7,600.2 L1613.7,601.3 L1620.5,603.5 L1627.6,604.5"/><path d="M1654.9,585.4 L1648.6,591.0 L1640.6,594.1 L1633.7,598.7 L1627.6,604.5"/><path d="M1738.5,554.0 L1738.2,554.9 L1734.2,560.8 L1729.7,566.6 L1727.2,573.2 L1724.1,579.5 L1720.8,585.7 L1718.2,592.3"/><path d="M1654.9,585.4 L1661.8,587.3 L1668.7,589.4 L1675.8,589.2 L1683.1,587.9 L1690.2,588.3 L1697.2,589.6 L1704.2,590.1 L1711.3,591.0 L1718.2,592.3"/><path d="M1567.9,709.7 L1574.0,706.1 L1580.6,703.6 L1586.5,699.7 L1593.2,697.4 L1599.7,694.7 L1606.9,693.5 L1612.6,689.0 L1619.0,686.1"/><path d="M1627.6,604.5 L1627.2,612.0 L1626.9,619.5 L1626.4,626.9 L1623.6,634.1 L1622.2,641.5 L1619.6,648.7 L1621.7,656.4 L1620.0,663.7 L1620.2,671.2 L1620.0,678.7 L1619.0,686.1"/><path d="M1557.8,784.3 L1564.9,787.4 L1570.8,792.6 L1577.8,795.7 L1583.9,800.6 L1590.5,804.5 L1597.3,808.1 L1604.1,811.7 L1610.9,815.3 L1617.8,818.9"/><path d="M1617.8,818.9 L1623.0,814.2 L1627.2,808.5 L1632.2,803.6 L1636.7,798.2 L1642.5,794.0 L1647.4,789.0 L1651.3,783.0 L1654.4,776.3 L1661.7,773.5 L1667.1,769.0 L1670.5,762.6 L1676.0,758.1 L1679.9,752.2 L1684.3,746.7 L1689.3,741.8 L1694.3,736.9"/><path d="M1619.0,686.1 L1625.0,690.6 L1631.4,694.8 L1638.1,698.4 L1644.2,702.8 L1650.5,707.1 L1655.6,713.1 L1661.3,718.1 L1668.8,720.5 L1675.6,724.1 L1681.3,729.1 L1688.2,732.5 L1694.3,736.9"/><path d="M1602.9,971.9 L1605.4,964.9 L1607.1,957.8 L1606.0,950.1 L1607.1,942.9 L1609.7,936.0 L1612.2,929.1 L1613.0,921.8"/><path d="M1602.9,971.9 L1596.8,975.6 L1590.9,979.7 L1585.1,984.0 L1579.1,987.9 L1571.6,989.2 L1565.1,992.2 L1560.2,998.1 L1553.0,1000.0 L1547.5,1004.6 L1540.0,1006.0 L1535.0,1011.6 L1527.7,1013.3 L1522.3,1018.3 L1516.0,1021.7 L1509.4,1024.7 L1503.1,1028.0 L1497.0,1031.7"/><path d="M1613.0,921.8 L1606.4,919.6 L1599.4,918.5 L1592.3,917.8 L1585.6,915.8 L1578.5,915.3 L1572.2,911.6 L1565.5,909.6 L1558.9,907.2 L1552.1,905.2 L1545.3,903.8 L1538.6,901.7 L1532.1,898.8 L1525.1,897.8 L1518.8,894.4 L1511.6,893.9 L1504.7,892.6 L1498.1,890.3 L1491.3,888.4"/><path d="M1491.3,888.4 L1487.9,895.0 L1483.6,901.2 L1481.1,908.4 L1478.5,915.4 L1475.9,922.4 L1471.6,928.7 L1467.1,934.8 L1466.4,942.8 L1462.5,949.2 L1459.4,956.0 L1455.2,962.2 L1451.7,968.9 L1448.8,975.8"/><path d="M1448.8,975.8 L1453.0,981.5 L1456.0,987.8 L1459.5,993.9 L1461.6,1000.8 L1464.4,1007.4 L1468.7,1013.0 L1474.1,1017.9 L1477.8,1023.9 L1481.4,1029.9"/><path d="M1497.0,1031.7 L1489.4,1029.1 L1481.4,1029.9"/><path d="M1663.4,1064.1 L1659.1,1058.1 L1655.7,1051.6 L1652.4,1044.9 L1649.2,1038.2 L1642.9,1033.5 L1640.3,1026.5 L1637.2,1019.7 L1633.4,1013.4 L1626.9,1008.9 L1624.8,1001.5 L1620.5,995.5 L1614.9,990.4 L1611.0,984.2 L1606.6,978.2 L1602.9,971.9"/><path d="M1760.1,972.3 L1755.1,966.7 L1750.4,960.7 L1745.1,955.5 L1739.8,950.2 L1732.8,946.6 L1729.2,939.5 L1724.0,934.2 L1719.6,927.9 L1712.2,924.7 L1706.7,919.6 L1702.0,913.8 L1696.5,908.6 L1690.4,904.2 L1684.8,899.1"/><path d="M1760.1,972.3 L1758.6,980.0 L1758.4,987.8 L1758.9,995.6 L1759.0,1003.4 L1757.2,1011.1 L1759.8,1019.0 L1759.6,1026.7 L1758.9,1034.5"/><path d="M1684.8,899.1 L1677.1,900.2 L1669.5,900.3 L1662.0,897.4 L1654.2,898.9 L1646.7,897.2 L1639.1,896.6"/><path d="M1639.1,896.6 L1634.5,902.4 L1630.1,908.2 L1624.2,912.6 L1618.3,916.8 L1613.0,921.8"/><path d="M1597.5,1135.9 L1592.7,1130.6 L1587.7,1125.3 L1582.8,1119.9 L1577.7,1114.8 L1572.5,1109.7 L1567.7,1104.3 L1563.9,1097.9 L1558.6,1093.0 L1554.2,1087.2 L1549.3,1081.8 L1545.0,1075.9 L1537.7,1072.9 L1533.2,1067.1 L1527.9,1062.2 L1522.7,1057.2 L1517.9,1051.8 L1511.9,1047.5 L1507.1,1042.1 L1502.1,1036.8 L1497.0,1031.7"/><path d="M1474.7,838.8 L1476.1,846.2 L1477.8,853.5 L1478.6,861.1 L1484.0,867.2 L1485.1,874.7 L1487.5,881.8 L1491.3,888.4"/><path d="M1617.8,818.9 L1620.2,825.8 L1623.0,832.6 L1625.2,839.6 L1627.5,846.6 L1629.7,853.6 L1631.5,860.7 L1634.2,867.6 L1633.4,875.4 L1636.6,882.1 L1637.3,889.5 L1639.1,896.6"/><path d="M1357.8,956.4 L1364.8,957.8 L1371.8,959.0 L1378.5,962.0 L1385.6,963.0 L1392.5,965.3 L1400.0,964.5 L1407.1,965.4 L1413.8,968.1 L1420.5,971.3 L1427.7,971.9 L1434.7,973.1 L1441.7,974.9 L1448.8,975.8"/><path d="M1436.4,1094.6 L1440.9,1089.0 L1446.0,1083.8 L1450.3,1078.1 L1453.3,1071.4 L1455.5,1064.3 L1461.6,1059.7 L1464.4,1053.0 L1469.9,1048.1 L1473.9,1042.1 L1477.3,1035.8 L1481.4,1029.9"/><path d="M1436.4,1094.6 L1429.4,1093.6 L1422.4,1093.2 L1415.4,1092.3 L1408.4,1091.2 L1401.2,1092.2 L1394.6,1088.6 L1387.4,1089.4 L1380.4,1088.7 L1373.7,1085.4 L1366.5,1086.1 L1359.8,1083.4 L1352.7,1083.0 L1345.8,1081.7"/><path d="M1345.8,1081.7 L1343.0,1074.7 L1341.5,1067.2 L1340.0,1059.8 L1337.0,1052.8 L1335.3,1045.4 L1333.1,1038.1 L1330.6,1031.0 L1330.4,1023.1 L1328.6,1015.8 L1325.5,1008.8 L1322.4,1001.8 L1320.1,994.6"/><path d="M1558.9,1181.5 L1551.6,1179.9 L1544.6,1177.4 L1537.7,1174.7 L1530.3,1173.8 L1522.7,1173.3 L1516.2,1169.3 L1509.6,1165.4 L1502.2,1164.4 L1495.1,1162.3 L1487.8,1160.8 L1480.4,1159.8 L1473.2,1158.0 L1466.5,1154.7 L1459.8,1151.2 L1452.7,1149.2 L1445.4,1147.6"/><path d="M1445.4,1147.6 L1443.3,1140.1 L1442.1,1132.6 L1442.1,1124.8 L1442.2,1117.0 L1438.9,1109.8 L1436.9,1102.3 L1436.4,1094.6"/><path d="M2031.9,1038.5 L2028.6,1032.1 L2024.3,1026.2 L2020.4,1020.1 L2017.2,1013.6 L2015.7,1006.3 L2012.1,1000.1 L2009.0,993.6 L2006.6,986.8 L2004.1,980.0 L2000.7,973.6 L1997.6,967.1"/><path d="M1875.8,1055.3 L1879.2,1048.8 L1881.5,1041.9 L1884.5,1035.3 L1886.5,1028.2 L1889.6,1021.6 L1892.8,1015.0 L1893.9,1007.6 L1897.1,1001.1 L1899.0,994.0 L1901.8,987.3"/><path d="M1997.6,967.1 L1990.3,968.7 L1983.0,970.5 L1975.8,973.0 L1968.5,974.9 L1960.8,975.1 L1953.0,974.2 L1945.8,976.6 L1938.8,980.0 L1931.0,979.6 L1924.0,982.7 L1916.5,984.0 L1909.1,985.4 L1901.8,987.3"/><path d="M1760.1,972.3 L1765.7,967.9 L1771.6,963.7 L1777.4,959.6 L1783.8,956.1 L1788.1,949.9 L1793.4,945.0 L1799.0,940.5 L1803.4,934.5 L1808.8,929.8 L1816.6,928.0 L1821.9,923.2 L1827.6,918.8 L1833.4,914.6 L1839.6,910.9 L1845.3,906.6 L1850.9,902.1"/><path d="M1901.8,987.3 L1898.3,981.1 L1894.6,975.1 L1891.0,969.0 L1888.3,962.3 L1883.9,956.7 L1881.5,949.9 L1875.9,945.0 L1870.4,940.0 L1867.2,933.6 L1864.7,926.8 L1861.7,920.4 L1857.2,914.8 L1854.7,908.1 L1850.9,902.1"/><path d="M1551.7,1269.0 L1547.9,1276.3 L1540.5,1279.8"/><path d="M1537.9,1324.0 L1538.2,1322.6 L1538.4,1315.5 L1538.1,1308.3 L1538.9,1301.2 L1538.8,1294.0 L1539.8,1286.9 L1540.5,1279.8"/><path d="M834.2,565.9 L830.0,571.6"/><path d="M834.2,565.9 L832.9,565.1"/><path d="M859.7,557.8 L851.8,562.4 L842.4,562.4 L834.2,565.9"/><path d="M1018.6,1324.0 L1021.5,1323.1 L1028.0,1320.0 L1035.3,1318.9 L1041.2,1314.3 L1048.3,1312.3 L1055.3,1310.4 L1062.0,1307.9 L1068.5,1304.5 L1074.7,1300.7 L1081.3,1297.7"/><path d="M1081.3,1297.7 L1086.7,1303.3 L1093.4,1307.4 L1099.5,1312.3 L1103.5,1319.6 L1110.2,1323.8 L1110.4,1324.0"/><path d="M952.1,1309.2 L958.4,1314.6 L965.2,1319.1 L971.0,1324.0"/><path d="M1081.8,1206.0 L1081.7,1213.1 L1082.8,1220.1 L1082.2,1227.2 L1081.1,1234.2 L1080.0,1241.3 L1080.2,1248.3 L1082.7,1255.4 L1082.4,1262.4 L1081.3,1269.5 L1081.2,1276.5 L1082.2,1283.6 L1081.7,1290.6 L1081.3,1297.7"/><path d="M1081.8,1206.0 L1075.3,1201.9 L1069.0,1197.2 L1061.3,1195.8 L1053.5,1194.5 L1047.1,1190.0 L1040.0,1187.2"/><path d="M1223.3,1324.0 L1222.9,1321.3 L1221.6,1314.3 L1220.5,1307.3"/><path d="M1220.5,1307.3 L1213.5,1309.7 L1206.4,1311.2 L1199.1,1312.3 L1192.1,1314.2 L1185.5,1317.5 L1179.0,1321.5 L1171.1,1320.3 L1164.3,1323.0 L1160.0,1324.0"/><path d="M1143.5,1115.8 L1142.6,1123.5 L1141.5,1131.1 L1141.0,1138.9 L1136.9,1145.9 L1133.2,1153.0 L1132.0,1160.6 L1131.4,1168.3 L1129.5,1175.8 L1128.8,1183.5"/><path d="M1143.5,1115.8 L1150.5,1112.8 L1157.0,1108.9 L1163.1,1104.2 L1170.9,1103.0 L1177.1,1098.3 L1184.2,1095.7 L1191.0,1092.2 L1197.7,1088.7 L1204.0,1084.4 L1211.1,1081.7 L1217.9,1078.4"/><path d="M1128.8,1183.5 L1135.6,1185.9 L1142.4,1188.5 L1148.6,1192.1 L1155.2,1195.0 L1162.4,1196.5 L1168.2,1201.3 L1175.2,1203.2 L1181.4,1207.0 L1188.2,1209.5 L1194.6,1212.7 L1201.8,1214.3 L1208.4,1217.1"/><path d="M1208.4,1217.1 L1214.0,1212.4 L1218.8,1206.9 L1224.9,1202.7 L1229.4,1196.8 L1235.3,1192.4 L1240.4,1187.1 L1244.8,1181.1 L1251.3,1177.4 L1255.5,1171.1 L1262.4,1167.9 L1268.0,1163.1 L1273.4,1158.2 L1278.3,1152.7 L1283.6,1147.7"/><path d="M1217.9,1078.4 L1222.9,1083.9 L1227.8,1089.3 L1232.1,1095.4 L1238.2,1099.7 L1241.6,1106.6 L1247.5,1111.1 L1252.5,1116.5 L1257.4,1121.9 L1263.2,1126.6 L1267.6,1132.6 L1272.7,1137.9 L1278.4,1142.6 L1283.6,1147.7"/><path d="M1077.2,1033.6 L1081.5,1039.2 L1086.1,1044.5 L1091.1,1049.6 L1095.3,1055.2 L1100.6,1060.0 L1105.0,1065.5 L1110.7,1070.0 L1114.5,1075.9 L1118.1,1082.1 L1122.9,1087.3 L1126.7,1093.2 L1129.5,1100.0 L1134.6,1104.9 L1139.4,1110.1 L1143.5,1115.8"/><path d="M1061.8,1029.8 L1056.0,1034.0 L1050.8,1038.9 L1045.5,1043.6 L1038.3,1045.9 L1033.3,1051.1 L1028.8,1056.9 L1022.1,1059.9 L1016.2,1063.9 L1010.7,1068.4 L1005.3,1073.1 L999.1,1076.8"/><path d="M1081.8,1206.0 L1088.9,1203.7 L1095.8,1200.8 L1101.9,1196.3 L1107.8,1191.3 L1114.4,1188.0 L1121.8,1186.1 L1128.8,1183.5"/><path d="M1226.4,996.7 L1226.2,1004.2 L1224.8,1011.6 L1223.2,1018.9 L1222.0,1026.3 L1220.5,1033.7 L1219.4,1041.0 L1217.9,1048.4 L1219.9,1056.1 L1220.7,1063.7 L1219.6,1071.1 L1217.9,1078.4"/><path d="M1229.4,1295.8 L1224.7,1301.3 L1220.5,1307.3"/><path d="M1229.4,1295.8 L1227.2,1288.7 L1225.3,1281.6 L1224.3,1274.2 L1222.1,1267.1 L1220.6,1259.9 L1220.0,1252.3 L1219.1,1244.9 L1215.9,1238.1 L1212.1,1231.5 L1210.8,1224.1 L1208.4,1217.1"/><path d="M1293.3,1147.8 L1288.5,1151.0 L1283.6,1147.7"/><path d="M1293.3,1147.8 L1297.9,1142.4 L1301.6,1136.4 L1306.3,1131.2 L1309.2,1124.5 L1312.8,1118.3 L1319.6,1114.8 L1323.4,1108.8 L1328.5,1103.9 L1332.6,1098.2 L1336.3,1092.1 L1341.6,1087.4 L1345.8,1081.7"/><path d="M687.7,916.4 L692.4,911.1 L696.0,904.9 L701.0,899.9 L706.0,894.9 L712.1,890.8 L718.1,886.6 L723.0,881.5 L726.0,874.8 L729.7,868.7 L734.3,863.4 L738.4,857.6"/><path d="M738.4,857.6 L734.0,851.6 L730.4,845.2 L725.2,839.7 L721.2,833.6 L718.0,826.8 L716.7,824.9"/><path d="M821.8,997.9 L822.4,990.7 L823.7,983.4 L823.5,976.1 L823.4,968.7 L822.5,961.3 L826.4,954.3 L825.5,946.9 L827.6,939.7 L828.7,932.5 L827.7,925.1 L828.4,917.8 L828.8,910.5"/><path d="M828.8,910.5 L823.5,905.7 L817.6,901.9 L811.6,898.1 L807.8,891.6 L802.9,886.4 L798.3,881.0 L793.1,876.1 L786.6,872.9 L781.5,868.0 L775.5,864.2 L769.6,860.3 L763.8,856.3"/><path d="M738.4,857.6 L746.7,854.5 L755.2,854.0 L763.8,856.3"/><path d="M920.9,1005.9 L923.1,998.6 L925.0,991.2 L927.5,984.1 L929.6,976.7 L934.6,970.6 L935.2,962.7 L936.9,955.2 L942.6,949.3 L946.8,942.8 L949.8,935.9 L951.2,928.3 L954.1,921.3"/><path d="M828.8,910.5 L835.3,907.8 L841.6,904.4 L848.9,904.2 L854.8,899.8 L860.9,896.0 L867.1,892.4 L874.6,892.4 L881.2,889.9 L888.1,888.4 L894.9,886.6"/><path d="M894.9,886.6 L901.4,890.7 L908.6,893.4 L915.9,896.1 L922.0,900.7 L927.4,906.5 L933.3,911.6 L940.7,914.0 L947.1,918.1 L954.1,921.3"/><path d="M1048.8,965.8 L1042.8,962.2 L1036.7,958.8 L1029.8,956.7 L1023.9,952.8 L1017.0,950.9 L1012.1,945.3 L1005.9,942.0 L999.5,939.1 L992.8,936.8 L987.6,931.6 L980.9,929.1 L975.2,925.1 L968.8,922.1 L962.5,919.0"/><path d="M954.1,921.3 L958.6,921.2 L962.5,919.0"/><path d="M1718.2,592.3 L1723.1,598.5 L1727.6,605.1 L1731.7,611.9 L1737.8,617.1 L1743.5,622.6"/><path d="M1743.5,622.6 L1743.5,630.0 L1743.9,637.4 L1743.8,644.9 L1742.8,652.3 L1744.1,659.7 L1745.1,667.1 L1747.4,674.4 L1746.7,681.8 L1746.1,689.3 L1746.2,696.7"/><path d="M1694.3,736.9 L1702.2,735.7 L1709.9,733.4 L1718.0,734.7"/><path d="M1746.2,696.7 L1740.9,702.6 L1737.2,709.7 L1732.2,715.8 L1727.4,722.0 L1722.2,728.0 L1718.0,734.7"/><path d="M1684.8,899.1 L1689.8,894.2 L1695.1,889.5 L1700.0,884.4 L1705.5,879.8 L1710.0,874.3 L1715.1,869.4 L1721.4,865.7 L1726.7,861.0 L1732.3,856.6 L1735.1,849.5 L1738.3,842.8 L1742.6,837.1 L1748.7,833.2 L1754.1,828.6 L1758.8,823.3 L1763.4,817.9"/><path d="M1718.0,734.7 L1721.7,741.0 L1725.9,747.0 L1728.0,754.2 L1729.8,761.5 L1733.5,767.8 L1738.1,773.5 L1742.5,779.4 L1746.8,785.4 L1750.4,791.8 L1752.8,798.8 L1755.7,805.5 L1759.1,811.9 L1763.4,817.9"/><path d="M1851.1,901.1 L1848.6,894.2 L1846.1,887.3 L1842.1,881.0 L1837.5,874.9 L1836.7,867.3 L1832.5,861.1 L1832.0,853.3 L1828.7,846.7 L1826.2,839.8 L1823.5,832.9"/><path d="M1823.5,832.9 L1815.9,831.6 L1808.6,828.5 L1801.3,825.9 L1794.0,823.2 L1786.6,820.9 L1778.7,820.5 L1770.8,820.2 L1763.4,817.9"/><path d="M2141.9,985.8 L2143.0,976.6 L2144.0,970.6"/><path d="M2144.0,964.0 L2143.2,958.1"/><path d="M2144.0,957.6 L2143.2,958.1"/><path d="M2144.0,724.2 L2138.4,725.0"/><path d="M2138.4,725.0 L2140.8,731.9 L2144.0,738.4 L2144.0,738.5"/><path d="M1997.6,967.1 L2000.6,960.7 L2000.9,953.6"/><path d="M1851.1,901.1 L1858.2,899.8 L1864.9,897.1 L1871.6,894.4 L1878.5,892.3 L1885.8,891.8 L1892.1,887.9 L1899.1,886.2 L1906.8,887.4 L1913.3,883.8 L1920.1,881.4 L1927.0,879.5 L1934.1,878.3 L1941.4,877.9 L1948.2,875.5 L1955.2,874.1"/><path d="M1955.2,874.1 L1958.2,880.5 L1962.5,886.2 L1964.8,893.0 L1968.6,899.0 L1972.0,905.2 L1974.0,912.1 L1977.7,918.2 L1983.0,923.2 L1985.6,929.9 L1990.3,935.3 L1993.6,941.6 L1996.8,947.9 L2000.9,953.6"/><path d="M2143.2,958.1 L2138.3,952.4 L2133.5,946.6 L2128.8,940.6 L2124.4,934.4 L2118.8,929.3 L2112.8,924.5 L2105.7,920.8 L2100.3,915.6 L2095.3,909.9 L2091.5,903.1 L2086.6,897.4"/><path d="M2000.9,953.6 L2007.0,949.5 L2013.1,945.5 L2018.3,940.2 L2024.6,936.4 L2030.0,931.2 L2035.8,926.7 L2043.4,924.9 L2049.8,921.3 L2056.6,918.5 L2062.9,914.7 L2068.7,910.3 L2075.0,906.4 L2080.4,901.4 L2086.6,897.4"/><path d="M2144.0,833.6 L2140.8,835.5 L2135.5,841.4 L2128.2,843.5 L2121.1,846.0 L2115.1,850.5 L2108.7,854.4 L2101.9,857.5 L2095.1,860.6 L2088.8,864.6"/><path d="M2086.6,897.4 L2087.3,889.2 L2085.4,880.8 L2086.0,872.6 L2088.8,864.6"/><path d="M1447.2,1263.8 L1442.1,1269.1 L1436.3,1273.9 L1432.4,1280.3 L1425.4,1283.8 L1422.6,1291.3 L1417.1,1296.3 L1411.0,1300.6 L1405.4,1305.5 L1401.3,1311.8 L1395.6,1316.5 L1390.8,1322.2"/><path d="M1447.2,1263.8 L1444.5,1256.6 L1441.3,1249.6 L1437.9,1242.7 L1433.9,1236.0 L1432.9,1228.0 L1430.5,1220.7 L1428.0,1213.4 L1422.4,1207.4 L1419.8,1200.2 L1415.9,1193.5"/><path d="M1342.0,1198.3 L1340.3,1205.4 L1337.7,1212.3 L1335.5,1219.3 L1334.8,1226.6 L1335.1,1234.2 L1332.5,1241.1 L1332.5,1248.6 L1328.6,1255.2 L1328.3,1262.6 L1324.7,1269.3 L1323.6,1276.5 L1323.3,1284.0 L1321.2,1291.0 L1319.5,1298.1"/><path d="M1342.0,1198.3 L1349.4,1197.2 L1356.7,1196.2 L1364.1,1195.8 L1371.6,1196.4 L1379.1,1197.3 L1386.5,1197.3 L1393.9,1197.7 L1401.2,1195.5 L1408.5,1194.0 L1415.9,1193.5"/><path d="M1390.8,1322.2 L1383.2,1321.0 L1375.6,1321.6 L1368.0,1322.1 L1360.3,1322.9 L1352.7,1322.3 L1345.1,1321.6"/><path d="M1345.1,1321.6 L1339.3,1315.2 L1333.1,1309.0 L1327.5,1302.3 L1319.5,1298.1"/><path d="M1392.3,1324.0 L1390.8,1322.2"/><path d="M1540.5,1279.8 L1533.4,1278.5 L1526.4,1276.2 L1519.3,1274.0 L1512.2,1272.7 L1504.8,1272.6 L1497.8,1270.4 L1490.7,1268.7 L1483.6,1266.8 L1476.0,1268.1 L1469.0,1265.7 L1461.8,1264.9 L1454.5,1264.3 L1447.2,1263.8"/><path d="M1445.4,1147.6 L1440.5,1153.7 L1435.0,1159.4 L1431.5,1166.4 L1429.4,1174.3 L1423.7,1179.9 L1420.0,1186.9 L1415.9,1193.5"/><path d="M1293.3,1147.8 L1298.1,1152.9 L1303.6,1157.3 L1308.6,1162.2 L1311.8,1168.9 L1315.6,1175.1 L1322.3,1178.3 L1327.5,1183.0 L1331.5,1188.9 L1336.4,1194.0 L1342.0,1198.3"/><path d="M1229.4,1295.8 L1236.9,1295.8 L1244.5,1295.1 L1252.0,1295.5 L1259.4,1297.3 L1266.9,1298.5 L1274.4,1300.0 L1281.9,1299.2 L1289.5,1298.2 L1296.9,1299.8 L1304.5,1298.6 L1312.0,1297.6 L1319.5,1298.1"/><path d="M1344.5,1324.0 L1345.1,1321.6"/><path d="M763.8,856.3 L768.9,850.6 L773.3,844.4 L778.8,839.0 L781.9,831.7 L785.8,825.1 L790.7,819.2 L796.0,813.7 L801.1,808.0 L805.1,801.4 L807.4,799.0"/><path d="M894.9,886.6 L895.1,879.5 L895.1,872.3 L895.8,865.1 L898.1,858.1 L899.4,850.9 L898.4,843.7 L897.9,836.5 L897.1,829.3 L895.5,822.1 L896.8,815.0 L897.6,807.8 L898.1,800.7 L899.1,793.5"/><path d="M847.0,794.1 L853.8,791.4 L861.3,792.1 L868.9,791.5 L876.5,790.5 L884.0,792.6 L891.5,793.6 L899.1,793.5"/><path d="M1034.5,805.9 L1031.2,804.3 L1028.9,807.1"/><path d="M1034.5,805.9 L1035.7,798.9 L1036.7,791.8 L1038.3,784.8 L1040.0,777.8 L1041.8,770.8 L1040.7,763.5 L1039.1,756.1 L1040.3,749.0 L1040.5,748.4"/><path d="M1028.9,807.1 L1022.1,804.5 L1015.6,801.2 L1008.9,798.6 L1001.9,796.6 L995.7,792.6 L988.3,791.6 L981.1,790.2 L974.6,786.9 L968.0,783.7 L961.3,780.9 L953.9,780.1 L947.7,776.0 L940.6,774.3 L933.9,771.4 L927.3,768.5"/><path d="M1004.9,668.6 L1000.8,668.8 L993.3,668.9 L986.0,668.1 L979.3,664.4 L972.0,664.1 L965.1,661.2 L961.7,660.5"/><path d="M927.3,768.5 L926.1,761.0 L924.5,753.5 L922.2,746.1 L922.0,745.6"/><path d="M936.1,666.0 L934.1,667.9 L928.2,672.9 L926.0,680.5 L922.5,684.9"/><path d="M1046.9,810.6 L1040.9,807.7 L1034.5,805.9"/><path d="M962.5,919.0 L966.2,912.8 L970.2,906.8 L975.0,901.2 L976.9,894.0 L981.5,888.3 L985.4,882.2 L990.9,877.0 L994.5,870.8 L998.7,864.8 L1001.0,857.8 L1002.1,850.1 L1005.2,843.5 L1011.1,838.6 L1015.2,832.6 L1019.4,826.7 L1021.5,819.5 L1025.0,813.2 L1028.9,807.1"/><path d="M1091.7,650.2 L1091.4,650.3 L1085.0,653.4 L1078.3,656.0 L1072.9,660.7 L1072.8,660.8"/><path d="M899.1,793.5 L905.2,789.0 L910.4,783.5 L915.3,777.7 L920.9,772.7 L927.3,768.5"/><path d="M850.3,687.2 L851.6,687.5 L859.4,685.3 L866.7,685.6 L873.8,687.9 L877.2,688.5"/><path d="M2138.4,725.0 L2131.9,720.9 L2126.1,715.8 L2118.8,713.0 L2113.2,707.6 L2106.7,703.6"/><path d="M2106.7,703.6 L2104.2,695.8 L2105.4,687.7 L2106.2,679.7 L2104.6,671.8"/><path d="M2144.0,615.5 L2139.8,618.7 L2135.2,624.1 L2133.6,631.6 L2131.4,638.8 L2126.6,644.0 L2122.9,650.1 L2118.0,655.3 L2112.5,660.1 L2109.0,666.3 L2104.6,671.8"/><path d="M2144.0,580.4 L2143.4,579.8 L2138.1,574.5 L2135.1,567.5 L2132.0,560.6 L2127.3,554.9 L2126.9,554.0"/><path d="M2037.0,554.0 L2035.1,554.7 L2029.8,560.0 L2023.6,564.2 L2017.9,569.0 L2012.5,574.1"/><path d="M1980.4,554.0 L1980.6,554.2 L1987.7,557.0 L1993.6,561.8 L1999.9,565.9 L2006.0,570.4 L2012.5,574.1"/><path d="M1856.3,554.0 L1857.3,555.2 L1862.0,560.8 L1867.0,566.1 L1872.2,571.2"/><path d="M1897.2,554.0 L1896.3,555.3 L1890.6,559.8 L1884.8,564.1 L1878.2,567.1 L1872.2,571.2"/><path d="M2104.6,671.8 L2098.7,667.7 L2093.1,663.0 L2087.7,658.1 L2080.6,655.8 L2075.5,650.4 L2069.5,646.4 L2064.5,640.9 L2058.1,637.4 L2051.1,634.9 L2043.7,633.0 L2038.3,628.1 L2032.0,624.6 L2026.8,619.3 L2021.0,615.0 L2014.7,611.4"/><path d="M2012.5,574.1 L2012.5,581.6 L2015.3,588.9 L2015.0,596.4 L2013.9,604.0 L2014.7,611.4"/><path d="M1743.5,622.6 L1750.4,621.3 L1757.3,619.7 L1764.2,618.3 L1770.7,615.1 L1778.0,615.2 L1784.3,611.2 L1791.7,612.1 L1798.9,611.9 L1805.2,608.0 L1811.9,605.6 L1818.6,603.3 L1825.8,603.0 L1832.9,602.4 L1839.9,601.6 L1846.7,599.6 L1853.4,597.4 L1860.2,595.5 L1866.9,593.3"/><path d="M1872.2,571.2 L1871.4,578.8 L1867.4,585.6 L1866.9,593.3"/><path d="M2017.3,793.7 L2010.1,795.8 L2004.3,800.6 L1998.0,804.5 L1992.0,808.8 L1985.7,812.7 L1978.4,814.7"/><path d="M2017.3,793.7 L2019.4,786.0 L2023.0,778.7 L2025.3,771.1 L2026.5,763.1"/><path d="M2026.5,763.1 L2021.4,758.1 L2017.3,752.2 L2012.5,747.0 L2007.7,741.7 L2002.5,736.8 L1997.1,732.1 L1991.7,727.3 L1988.7,720.6 L1982.2,716.8 L1979.1,710.0 L1974.1,704.9 L1970.9,698.3 L1965.0,694.0 L1960.9,688.1 L1955.5,683.4 L1951.4,677.5 L1946.8,672.1"/><path d="M1978.4,814.7 L1972.1,811.6 L1965.3,809.3 L1958.5,807.1 L1951.9,804.6 L1945.7,800.9 L1939.1,798.4 L1932.3,796.2 L1925.4,794.3 L1920.4,788.1 L1913.9,785.2 L1908.0,781.2 L1900.4,780.7 L1894.0,777.6 L1887.7,774.4 L1881.3,771.3 L1874.6,768.9"/><path d="M1874.6,768.9 L1874.7,761.9 L1875.9,754.8 L1876.2,747.7 L1876.1,740.7 L1873.4,733.8 L1873.0,726.8 L1871.7,719.8 L1871.1,712.8"/><path d="M1871.1,712.8 L1876.3,707.6 L1879.4,701.0 L1881.6,693.6 L1888.4,689.5 L1890.6,682.3 L1895.0,676.5 L1900.2,671.2"/><path d="M1900.2,671.2 L1907.9,671.4 L1915.8,669.4 L1923.5,669.0 L1931.3,670.2 L1939.0,672.7 L1946.8,672.1"/><path d="M1955.2,874.1 L1958.2,867.7 L1961.2,861.2 L1964.5,854.9 L1967.4,848.4 L1969.9,841.8 L1973.2,835.5 L1973.1,827.9 L1976.1,821.4 L1978.4,814.7"/><path d="M2088.8,864.6 L2083.7,859.5 L2078.4,854.7 L2073.6,849.3 L2068.8,844.0 L2061.9,840.7 L2057.4,835.0 L2052.7,829.5 L2046.8,825.3 L2041.1,820.8 L2036.9,814.8 L2033.3,808.3 L2028.5,802.9 L2022.6,798.6 L2017.3,793.7"/><path d="M2106.7,703.6 L2101.0,707.8 L2095.4,712.3 L2090.3,717.4 L2083.4,720.0 L2077.2,723.6 L2072.0,728.6 L2065.6,732.0 L2060.7,737.4 L2054.1,740.4 L2050.0,746.8 L2043.7,750.3 L2037.4,753.8 L2031.9,758.3 L2026.5,763.1"/><path d="M2014.7,611.4 L2009.1,615.6 L2003.8,620.2 L1997.9,624.1 L1992.4,628.4 L1989.1,635.3 L1985.0,641.2 L1978.4,644.3 L1974.4,650.4 L1967.7,653.4 L1962.7,658.2 L1956.6,662.0 L1951.9,667.2 L1946.8,672.1"/><path d="M1823.5,832.9 L1827.9,826.9 L1833.2,821.6 L1837.3,815.4 L1842.7,810.2 L1848.8,805.5 L1854.0,800.2 L1855.8,792.0 L1861.1,786.8 L1865.5,780.8 L1869.6,774.5 L1874.6,768.9"/><path d="M1746.2,696.7 L1753.6,697.1 L1760.9,698.6 L1768.1,700.8 L1775.2,703.1 L1782.8,702.3 L1790.1,703.4 L1797.7,703.0 L1805.3,701.7 L1812.8,701.2 L1820.2,702.0 L1827.4,704.5 L1834.7,705.8 L1841.7,709.0 L1849.2,709.0 L1856.4,710.7 L1863.7,712.3 L1871.1,712.8"/><path d="M1866.9,593.3 L1869.3,600.0 L1873.2,606.0 L1877.0,612.0 L1877.3,619.6 L1881.8,625.3 L1881.9,633.0 L1884.9,639.4 L1886.4,646.4 L1892.1,651.7 L1895.6,657.9 L1897.5,664.7 L1900.2,671.2"/></g><g fill="none" stroke="#393a46" stroke-width="1.6" stroke-linejoin="round"><path d="M562.0,980.0 L571.9,985.8 L581.9,991.6 L590.0,1000.0 L599.8,1003.3 L610.6,1002.3 L619.9,1007.4 L630.2,1008.8 L640.0,1012.0 L649.5,1015.4 L656.0,1023.2 L665.6,1026.5 L672.2,1034.1 L680.0,1040.0 L691.2,1040.5 L701.7,1043.6 L711.6,1048.6 L722.0,1052.0 L731.0,1056.4 L741.6,1054.8 L750.9,1057.9 L760.0,1062.0 L770.0,1060.0"/><path d="M631.0,961.0 L640.5,963.4 L649.9,967.0 L660.0,966.0 L670.1,965.0 L679.9,962.4 L690.4,964.3 L700.0,960.0 L709.5,950.3 L722.0,945.0 L729.0,933.3 L732.0,920.0 L731.7,909.9 L731.9,899.8 L732.7,889.8 L736.0,880.0 L731.6,870.4 L731.1,859.4 L726.0,850.0"/><path d="M732.0,920.0 L737.1,929.4 L738.0,940.2 L741.0,950.3 L745.0,960.0 L748.1,971.5 L749.4,983.4 L752.0,995.0 L757.2,1006.1 L759.9,1017.7 L760.0,1030.0 L765.0,1039.4 L765.6,1050.3 L770.0,1060.0"/><path d="M770.0,1060.0 L780.2,1064.6 L790.5,1069.0 L800.0,1075.0 L807.3,1080.4 L815.4,1084.8 L823.5,1089.0 L829.4,1096.5 L838.0,1100.0 L835.2,1109.8 L836.3,1120.2 L832.8,1129.9 L831.5,1140.0 L830.0,1150.0 L820.6,1154.9 L813.1,1162.3 L806.0,1170.0 L805.8,1180.2 L800.2,1189.6 L803.8,1200.3 L800.0,1210.0"/><path d="M800.0,1210.0 L792.8,1217.8 L783.9,1223.9 L779.0,1234.0 L770.0,1240.0 L765.1,1248.0 L762.3,1257.5 L754.1,1263.5 L748.7,1271.2 L745.0,1280.0 L736.4,1286.3 L726.9,1291.6 L720.0,1300.0 L714.2,1310.0 L705.7,1318.0 L700.0,1328.0"/><path d="M800.0,1210.0 L810.0,1209.7 L820.0,1208.8 L830.0,1207.2 L840.2,1208.7 L850.2,1208.5 L860.0,1205.0 L870.0,1208.2 L879.7,1212.6 L890.0,1215.0 L895.0,1223.0 L893.8,1232.8 L896.7,1241.5 L900.0,1250.0 L892.5,1255.9 L888.4,1263.9 L886.1,1273.2 L880.0,1280.0 L872.9,1285.6 L864.4,1289.2 L859.1,1297.4 L850.0,1300.0 L841.5,1303.1 L833.5,1307.6 L825.0,1310.8 L816.6,1313.9 L806.6,1312.8 L799.3,1319.3 L790.0,1320.0 L780.4,1324.1 L770.2,1326.0 L760.0,1328.0"/><path d="M950.0,1097.0 L960.7,1102.5 L973.4,1101.3 L984.0,1107.0 L993.1,1110.0 L1001.9,1113.9 L1011.0,1117.0 L1021.0,1120.1 L1031.3,1120.5 L1041.4,1121.6 L1051.9,1118.9 L1062.0,1121.0"/><path d="M991.0,1026.0 L999.5,1021.7 L1008.1,1017.5 L1018.1,1016.5 L1027.0,1013.1 L1033.7,1004.8 L1042.5,1001.1 L1052.0,999.0 L1062.0,995.7 L1072.2,993.9 L1082.7,993.7 L1093.0,992.0 L1104.3,992.5 L1115.7,990.6 L1127.0,992.0 L1134.0,999.7 L1136.1,1009.8 L1140.0,1019.0 L1150.4,1020.0 L1160.4,1022.9 L1170.3,1026.9 L1181.0,1026.0 L1189.6,1030.4 L1199.0,1032.8 L1208.0,1036.0 L1214.5,1044.9 L1222.0,1053.0 L1230.7,1056.8 L1240.8,1056.1 L1248.3,1063.8 L1257.5,1065.9 L1266.3,1069.3 L1276.0,1070.0 L1283.2,1079.8 L1293.0,1087.0"/><path d="M991.0,1026.0 L995.6,1033.9 L999.5,1042.1 L1005.1,1049.6 L1006.3,1059.2 L1011.0,1067.0 L1018.2,1073.9 L1023.2,1082.2 L1027.5,1090.8 L1031.0,1100.0 L1039.9,1103.6 L1047.0,1109.7 L1055.8,1113.5 L1062.0,1121.0 L1072.4,1118.6 L1082.5,1120.1 L1092.7,1120.4 L1102.8,1122.6 L1113.0,1124.0 L1123.0,1124.7 L1130.2,1132.8 L1140.0,1134.0 L1149.5,1136.1 L1159.5,1134.7 L1169.0,1136.7 L1178.5,1138.7 L1188.0,1141.0 L1197.5,1147.4 L1207.4,1153.2 L1215.0,1162.0 L1222.5,1154.7 L1229.0,1146.7 L1232.1,1136.4 L1238.0,1128.0 L1247.3,1120.9 L1255.2,1112.0 L1266.0,1107.0 L1273.6,1098.4 L1283.4,1092.9 L1293.0,1087.0"/><path d="M1293.0,1087.0 L1303.6,1090.7 L1312.1,1098.8 L1323.9,1100.2 L1333.0,1107.0 L1341.4,1102.2 L1351.6,1105.6 L1360.0,1101.2 L1368.5,1096.9 L1378.0,1097.0 L1388.0,1098.0 L1398.2,1095.7 L1408.0,1099.4 L1418.0,1100.0 L1425.2,1106.8 L1434.0,1110.4 L1443.0,1113.8 L1452.0,1117.0 L1461.3,1121.3 L1469.0,1128.0"/><path d="M1215.0,1162.0 L1222.4,1169.5 L1230.1,1176.7 L1234.2,1187.1 L1242.1,1194.1 L1249.0,1202.0 L1258.0,1203.7 L1267.0,1201.0 L1276.0,1200.3 L1285.0,1203.9 L1294.0,1204.9 L1303.0,1202.0 L1311.7,1198.8 L1319.0,1193.5 L1326.6,1188.6 L1333.0,1182.0 L1342.8,1182.3 L1352.1,1178.0 L1362.0,1178.6 L1371.6,1176.5 L1381.0,1173.4 L1391.0,1175.0 L1400.7,1170.2 L1411.1,1169.7 L1421.3,1167.6 L1432.0,1168.1 L1442.0,1165.0 L1449.6,1159.2 L1452.5,1150.0 L1460.3,1144.3 L1466.0,1137.1 L1469.0,1128.0"/><path d="M1028.0,1185.0 L1033.5,1193.4 L1043.2,1197.1 L1051.1,1202.7 L1058.4,1209.1 L1065.9,1215.3 L1072.0,1223.0 L1081.4,1222.2 L1090.3,1225.7 L1099.2,1228.4 L1108.4,1229.0 L1117.8,1227.9 L1127.0,1229.0 L1137.2,1227.4 L1147.4,1225.7 L1156.4,1219.1 L1167.0,1219.0 L1178.0,1213.3 L1188.0,1206.0 L1195.5,1198.5 L1200.2,1189.3 L1205.5,1180.4 L1209.5,1170.7 L1215.0,1162.0"/><path d="M1469.0,741.0 L1476.8,748.7 L1480.0,759.6 L1488.4,766.8 L1492.3,777.2 L1500.0,785.0 L1500.7,795.6 L1507.3,804.1 L1510.6,813.8 L1510.8,824.5 L1515.4,833.8 L1520.0,843.0 L1522.4,851.9 L1523.0,860.9 L1523.3,869.9 L1519.1,879.1 L1520.1,888.1 L1524.5,896.9 L1520.8,906.1 L1520.2,915.1 L1522.6,924.0 L1524.8,933.0 L1524.0,942.0 L1526.9,950.9 L1528.0,959.9 L1522.6,969.1 L1524.9,978.0 L1526.1,987.0 L1524.0,996.1 L1527.0,1005.0 L1520.5,1013.5 L1511.7,1020.0 L1505.1,1028.4 L1501.1,1038.9 L1493.0,1046.0 L1488.9,1055.6 L1483.3,1064.2 L1478.1,1073.2 L1471.0,1080.9 L1466.0,1090.0 L1468.2,1099.4 L1468.0,1109.0 L1470.5,1118.3 L1469.0,1128.0"/><path d="M1316.0,737.0 L1324.9,739.7 L1334.0,736.6 L1343.0,737.5 L1352.0,738.4 L1360.9,740.6 L1370.0,737.9 L1378.9,741.2 L1388.0,738.9 L1397.0,739.3 L1406.0,739.5 L1415.1,736.7 L1424.0,739.5 L1433.0,738.2 L1442.1,737.3 L1451.0,742.3 L1460.1,738.8 L1469.0,741.0"/><path d="M1112.0,773.0 L1111.5,784.3 L1109.3,795.6 L1110.0,807.0 L1105.5,816.1 L1102.5,825.8 L1097.3,834.6 L1092.9,843.7 L1089.0,853.0 L1097.3,863.7 L1108.0,872.0 L1111.4,881.8 L1109.6,892.0 L1112.5,901.8 L1113.3,911.9 L1113.0,922.0 L1112.9,933.7 L1116.0,945.0 L1116.8,954.0 L1117.2,963.0 L1116.8,972.1 L1116.7,981.2 L1120.0,990.0"/><path d="M1469.0,741.0 L1476.9,745.5 L1484.1,751.1 L1492.2,755.3 L1500.0,760.0 L1508.6,756.5 L1517.6,753.9 L1525.6,749.0 L1534.4,745.9 L1542.8,742.0 L1552.4,741.0 L1560.0,735.0 L1566.9,728.8 L1573.7,722.5 L1580.0,715.7 L1582.9,706.1 L1590.0,700.0 L1592.8,690.1 L1597.6,680.6 L1599.5,670.5 L1600.0,660.0 L1602.0,649.2 L1605.9,639.2 L1611.7,629.9 L1613.6,619.0 L1620.0,610.0 L1623.6,599.3 L1627.7,588.9 L1635.9,580.5 L1640.0,570.0 L1647.9,564.5 L1655.0,558.4 L1660.0,550.0"/><path d="M1400.0,640.0 L1409.6,636.0 L1420.3,637.3 L1430.2,634.9 L1439.6,629.9 L1450.0,630.0 L1460.8,628.6 L1471.0,625.4 L1479.4,617.6 L1490.9,618.2 L1500.0,612.0 L1509.9,609.4 L1520.0,607.9 L1530.6,608.9 L1540.4,606.0 L1549.6,600.0 L1560.0,600.0 L1570.1,601.3 L1580.0,603.4 L1590.2,604.0 L1600.3,604.9 L1610.2,607.3 L1620.0,610.0"/><path d="M1527.0,1005.0 L1536.2,1002.2 L1543.0,994.4 L1552.9,993.3 L1561.2,988.7 L1570.0,985.0 L1576.8,977.5 L1586.1,974.1 L1595.4,970.6 L1603.4,965.1 L1610.3,957.8 L1620.0,955.0 L1630.5,956.2 L1640.3,953.4 L1650.5,952.8 L1659.6,946.0 L1669.8,945.3 L1680.0,945.0 L1690.3,943.4 L1699.8,949.0 L1710.2,947.1 L1720.3,947.5 L1730.1,950.4 L1740.0,952.0 L1749.4,951.5 L1757.7,948.1 L1765.3,942.1 L1773.6,938.6 L1783.7,940.1 L1791.6,935.3 L1800.0,932.0 L1810.3,930.8 L1819.4,924.8 L1829.4,922.2 L1840.3,923.5 L1850.0,920.0 L1859.8,916.0 L1869.1,910.4 L1880.9,911.7 L1890.3,906.4 L1900.0,902.0 L1909.1,900.0 L1915.7,892.4 L1925.9,893.0 L1932.3,885.0 L1942.5,885.7 L1950.0,880.0"/><path d="M1950.0,880.0 L1958.5,883.9 L1967.1,887.5 L1974.9,892.8 L1982.2,899.0 L1992.3,899.6 L2000.0,905.0 L2007.5,911.5 L2011.3,920.8 L2018.4,927.6 L2024.8,935.1 L2030.2,943.1 L2036.5,950.6 L2040.0,960.0 L2047.9,965.4 L2054.1,972.5 L2060.8,979.2 L2065.6,987.8 L2074.2,992.4 L2080.0,1000.0 L2082.9,1008.6 L2087.5,1016.5 L2089.4,1025.4 L2094.2,1033.4 L2095.7,1042.4 L2099.9,1050.5 L2100.0,1060.0 L2101.5,1069.0 L2105.4,1077.2 L2110.3,1085.1 L2111.6,1094.2 L2111.8,1103.7 L2119.4,1110.7 L2120.0,1120.0 L2125.6,1128.8 L2134.3,1134.7 L2141.0,1142.5 L2148.0,1150.0"/><path d="M1950.0,880.0 L1953.5,870.3 L1952.4,859.9 L1954.5,850.0 L1957.1,840.2 L1960.4,830.4 L1958.1,819.9 L1962.5,810.3 L1962.0,800.0 L1965.4,791.4 L1967.2,782.4 L1968.1,773.2 L1970.0,764.2 L1970.5,754.9 L1973.2,746.1 L1975.1,737.2 L1981.2,729.2 L1982.0,720.0 L1978.1,711.7 L1975.1,703.1 L1972.1,694.4 L1974.0,684.4 L1971.6,675.6 L1968.0,667.2 L1963.2,659.1 L1962.0,650.0 L1953.9,644.9 L1946.9,638.4 L1940.5,631.4 L1932.1,626.5 L1926.2,619.0 L1918.3,613.6 L1914.0,604.2 L1905.0,600.0 L1901.0,591.0 L1892.9,585.5 L1885.4,579.6 L1882.5,569.6 L1873.4,565.0 L1867.5,557.7 L1862.0,550.0"/><path d="M1469.0,1128.0 L1475.3,1135.5 L1476.7,1145.1 L1479.6,1153.9 L1483.0,1162.7 L1488.2,1170.7 L1490.0,1180.0 L1484.0,1188.4 L1480.4,1198.5 L1473.2,1206.0 L1468.0,1215.0 L1460.0,1222.0 L1453.8,1229.1 L1448.6,1237.3 L1442.0,1244.0 L1434.2,1249.5 L1427.8,1256.5 L1420.0,1262.0 L1413.0,1268.3 L1406.5,1275.2 L1398.9,1280.9 L1392.7,1288.0 L1385.8,1294.4 L1380.0,1302.0 L1372.1,1309.4 L1368.5,1319.7 L1362.0,1328.0"/><path d="M1490.0,1180.0 L1499.9,1177.8 L1510.3,1180.6 L1519.8,1174.5 L1530.2,1176.8 L1540.1,1175.1 L1549.7,1170.4 L1560.0,1172.0 L1569.7,1175.7 L1579.6,1177.7 L1589.9,1177.8 L1599.8,1180.1 L1609.7,1182.2 L1620.0,1182.0 L1630.7,1183.2 L1640.0,1188.6 L1650.0,1191.8 L1660.0,1195.0"/><path d="M1640.0,1182.0 L1647.7,1188.1 L1656.3,1192.2 L1664.8,1196.6 L1674.1,1199.6 L1681.8,1205.5 L1690.9,1208.7 L1700.0,1212.0 L1707.7,1218.9 L1717.7,1222.7 L1726.8,1227.7 L1734.9,1234.2 L1742.0,1242.0 L1747.7,1251.6 L1754.1,1260.9 L1755.2,1272.9 L1762.0,1282.0 L1767.3,1291.4 L1772.5,1300.8 L1778.2,1310.0 L1783.5,1319.4 L1790.0,1328.0"/><path d="M1640.0,1182.0 L1643.4,1191.6 L1649.5,1200.4 L1648.3,1211.6 L1651.9,1221.2 L1656.6,1230.3 L1660.0,1240.0 L1664.8,1247.6 L1669.2,1255.5 L1677.2,1261.1 L1678.8,1270.8 L1686.2,1276.7 L1692.1,1283.6 L1696.2,1291.7 L1700.0,1300.0 L1704.8,1310.1 L1713.5,1317.7 L1718.0,1328.0"/><path d="M950.0,1290.0 L960.0,1291.4 L970.0,1292.9 L980.0,1290.0 L990.0,1289.3 L1000.0,1289.9 L1010.0,1291.1 L1020.0,1290.0 L1030.0,1291.9 L1040.0,1291.3 L1050.0,1291.7 L1060.1,1288.6 L1070.1,1289.3 L1080.0,1290.2 L1090.0,1292.0 L1100.2,1291.8 L1109.8,1287.5 L1120.1,1287.4 L1129.5,1282.4 L1139.6,1281.1 L1150.0,1282.0"/><path d="M331.0,696.0 L339.6,686.9 L350.0,680.0 L357.7,673.4 L364.8,666.1 L371.0,658.0 L374.5,645.7 L376.0,633.0"/><path d="M346.0,822.0 L342.0,830.2 L335.9,836.9 L331.2,844.6 L326.0,852.0 L327.9,862.0 L331.8,871.6 L328.9,882.4 L333.0,892.0 L333.8,902.2 L331.0,912.0 L335.6,920.7 L342.5,927.2 L351.0,932.0"/></g><g fill="none" stroke="#262e66" stroke-width="1.7" stroke-linejoin="round"><path d="M738.0,930.0 L746.7,937.4 L753.4,946.6 L761.0,955.0 L764.1,965.4 L767.7,975.5 L773.1,984.9 L777.6,994.7 L781.0,1005.0 L788.4,1013.1 L793.3,1023.1 L801.0,1031.0 L806.7,1038.9 L810.8,1047.8 L816.0,1056.0 L826.5,1060.0 L836.0,1066.0 L836.9,1077.7 L836.6,1089.4 L839.0,1101.0 L835.7,1111.4 L829.5,1120.6 L826.0,1131.0 L819.3,1139.3 L811.8,1146.9 L806.0,1156.0 L804.1,1165.6 L804.1,1175.4 L800.8,1184.8 L800.7,1194.7 L800.7,1204.5 L798.0,1214.0"/><path d="M690.0,965.0 L699.9,962.5 L710.0,963.0 L720.0,962.0 L730.0,958.4 L740.0,955.0 L750.5,954.4 L761.0,955.0"/><path d="M829.0,1189.0 L840.2,1190.4 L851.0,1194.0 L859.5,1189.1 L868.2,1184.5 L877.7,1181.4 L886.0,1176.0 L893.3,1170.2 L902.4,1167.7 L910.5,1163.4 L917.4,1157.0 L926.6,1154.6 L934.0,1149.0 L943.2,1146.0 L952.4,1143.0 L960.8,1137.7 L969.9,1134.4 L978.9,1130.8 L988.6,1129.0 L997.0,1124.0 L1005.9,1127.7 L1015.1,1130.4 L1024.1,1134.0 L1033.2,1137.0 L1042.0,1141.0 L1052.0,1148.0 L1062.6,1150.1 L1072.8,1153.7 L1082.3,1159.2 L1093.0,1161.0 L1103.0,1165.0 L1112.9,1168.3 L1123.5,1168.3 L1133.7,1170.3 L1143.8,1173.0 L1154.0,1175.0 L1164.3,1175.2 L1174.4,1177.0 L1184.3,1179.9 L1194.5,1180.8 L1204.7,1181.8 L1215.0,1182.0 L1223.3,1188.3 L1231.3,1195.0 L1239.7,1201.1 L1249.0,1206.0 L1258.0,1206.1 L1267.0,1206.7 L1276.0,1204.6 L1285.0,1206.7 L1294.0,1205.9 L1303.0,1206.0 L1303.7,1217.6 L1306.0,1229.0 L1303.6,1239.3 L1302.6,1249.8 L1300.0,1260.0 L1300.3,1270.1 L1296.7,1279.9 L1298.1,1290.1 L1296.1,1300.0 L1295.5,1310.0 L1294.6,1320.1 L1293.0,1330.0"/><path d="M871.0,781.0 L877.2,788.2 L883.3,795.3 L891.0,801.0 L900.4,803.5 L909.2,807.8 L918.8,810.0 L927.7,814.0 L937.0,817.0 L946.4,823.0 L956.1,828.7 L965.3,834.9 L974.0,842.0 L984.6,849.8 L994.0,859.0 L992.8,872.0 L994.0,885.0 L986.5,895.0 L979.0,905.0 L983.8,913.1 L987.0,922.0 L996.1,927.5 L1005.6,932.2 L1015.9,935.1 L1025.9,938.6 L1035.0,944.0 L1042.7,949.7 L1050.1,955.8 L1056.7,962.8 L1064.3,968.6 L1071.1,975.3 L1078.2,981.7 L1084.7,988.8 L1092.0,995.0 L1088.9,1003.7 L1087.3,1012.8 L1086.0,1022.0 L1094.2,1027.5 L1102.1,1033.1 L1110.0,1039.0 L1121.0,1040.1 L1132.0,1040.6 L1143.0,1041.5 L1154.0,1043.0 L1154.7,1033.7 L1157.3,1024.9 L1160.0,1016.0"/><path d="M1110.0,764.0 L1108.6,774.8 L1111.1,785.5 L1110.0,796.2 L1110.0,807.0 L1105.4,816.0 L1100.6,824.9 L1098.2,835.0 L1093.8,844.1 L1089.0,853.0 L1095.6,861.8 L1101.3,871.3 L1107.1,880.7 L1113.0,890.0 L1113.2,900.2 L1116.0,910.0 L1124.5,913.2 L1133.3,915.5 L1142.7,915.2 L1151.5,917.4 L1160.0,921.0 L1169.0,927.2 L1178.1,933.3 L1188.0,938.0 L1190.1,948.0 L1191.7,958.1 L1194.0,968.0 L1204.3,972.7 L1213.2,979.7 L1221.8,987.1 L1232.0,992.0 L1238.8,999.5 L1246.3,1006.3 L1253.6,1013.3 L1262.0,1019.0 L1264.5,1028.1 L1266.7,1037.3 L1268.3,1046.6 L1269.0,1056.0 L1264.3,1064.0 L1259.2,1071.7 L1255.0,1080.0"/><path d="M1300.0,748.0 L1297.7,758.9 L1297.3,769.9 L1296.6,781.0 L1296.0,792.0 L1290.0,798.9 L1285.3,806.9 L1279.7,814.1 L1275.5,822.4 L1269.0,829.0 L1274.5,836.4 L1281.9,842.1 L1286.6,850.3 L1293.3,856.6 L1300.3,862.8 L1306.0,870.0 L1316.6,872.3 L1326.6,876.1 L1336.5,880.6 L1346.6,884.2 L1357.0,887.0 L1366.8,888.4 L1376.3,890.8 L1385.5,894.6 L1395.0,897.0 L1399.4,905.1 L1404.5,912.8 L1409.6,920.6 L1413.2,929.2 L1419.4,936.3 L1423.3,944.7 L1427.5,952.9 L1432.0,961.0 L1428.9,971.8 L1428.1,982.9 L1425.6,993.8 L1425.0,1005.0 L1416.5,1010.7 L1408.4,1017.0 L1399.9,1022.6 L1390.2,1026.5 L1382.2,1032.8 L1374.0,1039.0 L1364.0,1042.4 L1354.0,1046.0 L1343.4,1047.4 L1333.1,1049.7 L1323.0,1053.0 L1311.7,1056.6 L1300.5,1060.4 L1289.0,1063.0"/><path d="M1445.0,1168.0 L1436.0,1172.4 L1427.0,1176.6 L1419.3,1183.3 L1410.8,1188.6 L1401.7,1192.7 L1392.8,1197.4 L1384.0,1202.0 L1378.1,1209.9 L1374.0,1218.9 L1367.1,1226.1 L1361.8,1234.4 L1357.0,1243.0 L1356.2,1252.7 L1356.3,1262.4 L1353.3,1271.9 L1354.5,1281.7 L1352.2,1291.3 L1353.1,1301.1 L1352.4,1310.7 L1350.0,1320.3 L1350.0,1330.0"/><path d="M1473.0,1107.0 L1481.2,1101.5 L1490.7,1098.2 L1498.5,1092.0 L1507.0,1087.0 L1516.1,1091.0 L1524.6,1095.9 L1532.9,1101.2 L1541.2,1106.6 L1550.0,1111.0"/><path d="M1076.0,1250.0 L1085.1,1248.9 L1093.1,1244.1 L1102.1,1242.4 L1110.6,1239.5 L1120.0,1239.2 L1128.0,1234.4 L1137.0,1233.0 L1142.5,1242.7 L1146.7,1253.0 L1150.0,1263.6 L1154.0,1274.0"/><path d="M1811.0,930.0 L1808.6,940.4 L1807.4,950.9 L1806.6,961.4 L1806.0,972.0 L1805.5,981.6 L1806.7,991.0 L1809.5,1000.2 L1810.9,1009.6 L1809.7,1019.3 L1811.3,1028.6 L1813.0,1038.0 L1822.0,1041.8 L1829.2,1048.4 L1837.9,1052.7 L1846.0,1058.0 L1852.5,1064.7 L1858.9,1071.7 L1865.5,1078.3 L1871.0,1086.0 L1880.4,1089.4 L1888.7,1094.8 L1897.4,1099.8 L1905.2,1106.1 L1915.1,1108.6 L1922.6,1115.5 L1932.0,1119.0 L1940.3,1123.3 L1947.9,1128.6 L1955.1,1134.8 L1962.9,1139.8 L1971.4,1143.8 L1979.9,1147.9 L1987.0,1154.0 L1995.4,1158.9 L2003.9,1163.7 L2012.0,1169.0 L2010.7,1178.5 L2012.9,1188.0 L2012.4,1197.5 L2012.0,1207.0 L2004.4,1212.1 L1999.3,1220.1 L1991.8,1225.2 L1984.2,1230.3 L1977.5,1236.4 L1972.1,1244.0 L1965.3,1250.0 L1958.5,1256.0 L1950.0,1260.1 L1944.0,1267.0 L1933.6,1269.7 L1922.9,1270.3 L1912.3,1271.8 L1902.0,1275.0"/><path d="M1800.0,728.0 L1801.1,737.0 L1801.9,746.0 L1800.5,755.1 L1802.1,764.0 L1803.8,773.0 L1803.1,782.0 L1804.9,791.0 L1805.0,800.0 L1807.3,809.9 L1809.8,819.8 L1809.2,830.1 L1810.4,840.2 L1812.9,850.1 L1815.0,860.0 L1816.9,870.6 L1822.8,880.0 L1825.4,890.4 L1827.9,900.8 L1831.0,911.0"/><path d="M389.0,1244.0 L399.0,1242.8 L408.7,1240.3 L417.9,1236.2 L427.5,1233.3 L437.3,1231.3 L447.0,1229.0 L458.0,1235.5 L469.0,1242.0 L478.0,1240.2 L485.9,1235.1 L495.1,1233.9 L503.6,1230.7 L512.0,1227.0 L521.4,1220.8 L530.0,1213.6 L538.5,1206.3 L547.0,1199.0 L559.6,1200.0 L572.0,1202.0 L579.3,1207.2 L586.3,1213.0 L593.0,1219.0 L594.7,1229.5 L599.2,1239.2 L601.4,1249.5 L603.0,1260.0 L610.6,1266.1 L619.4,1270.4 L627.7,1275.4 L635.0,1282.0 L638.9,1290.6 L640.0,1300.0 L643.3,1308.9 L644.0,1318.4 L648.0,1327.0"/><path d="M484.0,1094.0 L492.0,1100.4 L500.4,1106.0 L510.2,1109.6 L519.1,1114.5 L527.0,1121.0 L536.6,1125.6 L545.0,1132.2 L553.7,1138.3 L563.1,1143.3 L572.0,1149.0 L581.1,1154.0 L589.5,1160.1 L598.0,1166.0 L607.4,1163.3 L616.7,1160.5 L626.0,1157.7 L635.0,1154.0 L640.5,1161.7 L647.1,1168.3 L654.6,1174.2 L660.0,1182.0 L669.6,1187.4 L680.3,1190.4 L689.9,1195.7 L700.0,1200.0"/><path d="M379.0,940.0 L388.9,938.0 L399.1,937.4 L409.0,935.0 L416.2,941.9 L422.0,950.0 L431.4,950.4 L440.7,951.5 L450.0,952.4 L459.0,955.7 L468.4,955.9 L477.8,956.3 L487.0,958.0"/><path d="M1640.0,570.0 L1648.7,572.6 L1656.7,577.1 L1665.7,578.6 L1674.5,580.7 L1682.6,585.2 L1691.3,587.6 L1700.0,590.0 L1706.6,597.4 L1715.8,601.6 L1722.5,608.7 L1729.4,615.7 L1736.8,622.0 L1744.2,628.5 L1753.4,632.7 L1760.0,640.0 L1767.6,645.0 L1775.2,650.0 L1782.4,655.6 L1788.2,663.0 L1796.2,667.5 L1802.9,673.8 L1811.1,677.9 L1817.5,684.5 L1825.5,689.0 L1833.2,694.0 L1840.0,700.0 L1850.1,699.2 L1860.2,698.0 L1869.8,693.8 L1880.0,693.6 L1890.1,692.0 L1900.0,690.0 L1908.7,686.2 L1917.9,683.6 L1926.7,680.0 L1935.7,677.2 L1944.8,674.3 L1954.1,672.3 L1963.1,669.4 L1971.7,665.2 L1980.5,661.6 L1990.0,660.0 L1997.5,654.0 L2005.9,649.3 L2012.8,642.6 L2020.8,637.3 L2028.4,631.5 L2037.2,627.4 L2044.5,621.2 L2051.5,614.5 L2060.0,610.0 L2068.4,605.9 L2077.5,603.7 L2086.4,601.1 L2095.3,598.4 L2103.6,593.8 L2112.5,591.0 L2121.8,589.6 L2130.3,585.7 L2139.0,582.4 L2148.0,580.0"/><path d="M1700.0,1210.0 L1708.8,1213.8 L1716.5,1219.8 L1726.0,1222.4 L1734.2,1227.3 L1743.0,1231.0 L1751.5,1235.5 L1760.0,1240.0 L1767.3,1247.8 L1775.0,1255.1 L1784.3,1260.7 L1792.6,1267.3 L1800.0,1275.0 L1806.1,1283.8 L1814.0,1291.1 L1820.0,1300.0"/></g><circle cx="492" cy="960" r="3" fill="#0a0a12"/><circle cx="712" cy="898" r="3" fill="#0a0a12"/><circle cx="1088.5" cy="888.6" r="3" fill="#0a0a12"/><circle cx="600" cy="1142" r="3" fill="#0a0a12"/><circle cx="768.6" cy="1316" r="3" fill="#0a0a12"/><circle cx="1219.6" cy="1186.9" r="3" fill="#0a0a12"/><circle cx="1843.6" cy="1034" r="3" fill="#0a0a12"/><g font-family="Liberation Sans" font-size="22" fill="#d2d2d6" stroke="#15151c" stroke-width="3.2" paint-order="stroke" stroke-linejoin="round"><text x="1513" y="555.4" textLength="56" lengthAdjust="spacingAndGlyphs">Latvia</text><text x="840" y="600.6" textLength="92" lengthAdjust="spacingAndGlyphs">Denmark</text><text x="2045" y="648.8" textLength="81" lengthAdjust="spacingAndGlyphs">Moscow</text><text x="1487" y="689.6" textLength="85" lengthAdjust="spacingAndGlyphs">Lithuania</text><text x="288" y="737.3" textLength="165" lengthAdjust="spacingAndGlyphs">United Kingdom</text><text x="1657" y="796.3" textLength="72" lengthAdjust="spacingAndGlyphs">Belarus</text><text x="1001" y="892.8" textLength="57" lengthAdjust="spacingAndGlyphs">Berlin</text><text x="569" y="902.1" textLength="116" lengthAdjust="spacingAndGlyphs">Amsterdam</text><text x="1278" y="923.8" textLength="67" lengthAdjust="spacingAndGlyphs">Poland</text><text x="389" y="964.6" textLength="74" lengthAdjust="spacingAndGlyphs">London</text><text x="885" y="978.4" textLength="90.5" lengthAdjust="spacingAndGlyphs">Germany</text><text x="637" y="1030.8" textLength="82.5" lengthAdjust="spacingAndGlyphs">Belgium</text><text x="1774" y="1038.1" textLength="38" lengthAdjust="spacingAndGlyphs">Kyiv</text><text x="1080.5" y="1078.8" textLength="139" lengthAdjust="spacingAndGlyphs">Czech Republic</text><text x="675.5" y="1078.8" textLength="117" lengthAdjust="spacingAndGlyphs">Luxembourg</text><text x="1796" y="1138.8" textLength="77" lengthAdjust="spacingAndGlyphs">Ukraine</text><text x="527" y="1146.4" textLength="46" lengthAdjust="spacingAndGlyphs">Paris</text><text x="1296" y="1153.8" textLength="74" lengthAdjust="spacingAndGlyphs">Slovakia</text><text x="1121" y="1189.3" textLength="69" lengthAdjust="spacingAndGlyphs">Vienna</text><text x="1270" y="1255.1" textLength="79" lengthAdjust="spacingAndGlyphs">Hungary</text><text x="1696" y="1265.3" textLength="79" lengthAdjust="spacingAndGlyphs">Moldova</text><text x="527" y="1271.8" textLength="66" lengthAdjust="spacingAndGlyphs">France</text><text x="779" y="1275.8" textLength="117" lengthAdjust="spacingAndGlyphs">Switzerland</text><text x="666.5" y="1320.8" textLength="74.5" lengthAdjust="spacingAndGlyphs">Geneva</text><text x="1070" y="1320.8" textLength="80" lengthAdjust="spacingAndGlyphs">Slovenia</text><text x="1489" y="1327.8" textLength="86" lengthAdjust="spacingAndGlyphs">Romania</text></g><g transform="translate(1310,968)"><path d="M23,64 L3.95,35.9 A23,23 0 1,1 42.05,35.9 Z" fill="#ff9000" stroke="#000028" stroke-width="1" stroke-opacity="0.5"/><path d="M20.4,8.2 Q23,4.6 25.6,8.2 L38.6,31.2 Q40.4,34.8 36.4,34.8 L9.6,34.8 Q5.6,34.8 7.4,31.2 Z" fill="#000028"/><rect x="21.2" y="12.8" width="3.6" height="11" rx="1.8" fill="#fff"/><circle cx="23" cy="29" r="2.3" fill="#fff"/></g><g transform="translate(1204,1102)"><path d="M23,64 L3.95,35.9 A23,23 0 1,1 42.05,35.9 Z" fill="#d9233a" stroke="#000028" stroke-width="1" stroke-opacity="0.5"/><circle cx="23" cy="22" r="15.5" fill="#000028"/><rect x="21.2" y="12.4" width="3.6" height="11.4" rx="1.8" fill="#fff"/><circle cx="23" cy="29" r="2.3" fill="#fff"/></g><g transform="translate(1356,1146)"><path d="M23,64 L3.95,35.9 A23,23 0 1,1 42.05,35.9 Z" fill="#d9233a" stroke="#000028" stroke-width="1" stroke-opacity="0.5"/><circle cx="23" cy="22" r="15.5" fill="#000028"/><rect x="21.2" y="12.4" width="3.6" height="11.4" rx="1.8" fill="#fff"/><circle cx="23" cy="29" r="2.3" fill="#fff"/></g><g transform="translate(1271,1252)"><path d="M23,64 L3.95,35.9 A23,23 0 1,1 42.05,35.9 Z" fill="#d9233a" stroke="#000028" stroke-width="1" stroke-opacity="0.5"/><circle cx="23" cy="22" r="15.5" fill="#000028"/><rect x="21.2" y="12.4" width="3.6" height="11.4" rx="1.8" fill="#fff"/><circle cx="23" cy="29" r="2.3" fill="#fff"/></g><g transform="translate(1098,1265)"><path d="M23,64 L3.95,35.9 A23,23 0 1,1 42.05,35.9 Z" fill="#ff9000" stroke="#000028" stroke-width="1" stroke-opacity="0.5"/><path d="M20.4,8.2 Q23,4.6 25.6,8.2 L38.6,31.2 Q40.4,34.8 36.4,34.8 L9.6,34.8 Q5.6,34.8 7.4,31.2 Z" fill="#000028"/><rect x="21.2" y="12.8" width="3.6" height="11" rx="1.8" fill="#fff"/><circle cx="23" cy="29" r="2.3" fill="#fff"/></g></svg><!--MAPHTML--></div><div class="b" style="left:2212.0px;top:328.0px;width:780.0px;height:1002.0px;background:#23233c;"></div><div class="t" style="left:2246.0px;top:368.5px;font-size:28px;line-height:28px;color:#ffffff;font-weight:700;letter-spacing:-0.6px;">Unacknowledged alarms</div><svg class="b" style="left:2930.0px;top:369.0px;" width="28" height="28" viewBox="0 0 28 28"><path d="M3.5 3.5L24.5 24.5M24.5 3.5L3.5 24.5" stroke="#b9b9c8" stroke-width="2.6" stroke-linecap="round"/></svg><div class="b" style="left:2251.0px;top:438.0px;width:702.0px;height:64.0px;background:#000028;border-radius:6px;"></div><svg class="b" style="left:2261.5px;top:448.0px;" width="40" height="40" viewBox="0 0 40 40"><circle cx="20" cy="20" r="12.2" fill="none" stroke="#7c7c92" stroke-width="2.6"/><line x1="28.8" y1="28.8" x2="37.2" y2="37.2" stroke="#7c7c92" stroke-width="2.6" stroke-linecap="round"/></svg><div class="t" style="left:2316.0px;top:458.3px;font-size:28px;line-height:28px;color:#a3a3b4;letter-spacing:-0.9px;">Search...</div><div class="b" style="left:2276.0px;top:565.8px;width:80.0px;height:80.0px;border:2.2px solid #55556f;border-radius:50%;box-sizing:border-box;"></div><svg class="b" style="left:2292.0px;top:581.8px;" width="48" height="48" viewBox="0 0 48 48"><path d="M31.4 5.2L14.6 26.4l10.4 3.2-6.4 15 17.4-21.2-10.4-3.2z" transform="translate(2.3,2.6) scale(0.9)" fill="none" stroke="#fff" stroke-width="2.6" stroke-linejoin="round"/></svg><svg class="b" style="left:2336.0px;top:554.0px;transform:translateY(0px);" width="40" height="38" viewBox="0 0 40 38"><path d="M16.8 3.8c1.4-2.4 4.6-2.4 6 0l14.6 25.4c1.4 2.4-.4 5.4-3 5.4H5.2c-2.6 0-4.4-3-3-5.4z" fill="#ff9000" transform="translate(0,0.6)"/><rect x="17.8" y="10.2" width="4" height="11.2" rx="2" fill="#000028"/><circle cx="19.8" cy="27" r="2.5" fill="#000028"/></svg><div class="t" style="left:2404.5px;top:568.8px;font-size:28px;line-height:28px;color:#ffffff;font-weight:700;letter-spacing:-0.6px;">Relay pickup</div><div class="t" style="left:2404.5px;top:608.5px;font-size:28px;line-height:28px;color:#ffffff;letter-spacing:-0.8px;">SIPS_104</div><div class="t" style="left:2404.5px;top:648.3px;font-size:28px;line-height:28px;color:#b4b4c4;letter-spacing:-0.8px;">Rama site</div><div class="b" style="left:2244.0px;top:709.0px;width:716.0px;height:2.0px;background:#4c4c66;"></div><div class="b" style="left:2276.0px;top:741.8px;width:80.0px;height:80.0px;border:2.2px solid #55556f;border-radius:50%;box-sizing:border-box;"></div><svg class="b" style="left:2292.0px;top:757.8px;" width="48" height="48" viewBox="0 0 48 48"><g fill="none" stroke="#fff" stroke-width="2.6"><rect x="6.3" y="10.6" width="34.6" height="26.2" rx="4"/><line x1="6.3" y1="19.6" x2="40.9" y2="19.6"/><line x1="6.3" y1="28.8" x2="40.9" y2="28.8"/></g><g stroke="#fff" stroke-width="2.6" stroke-linecap="round"><line x1="11.8" y1="14.6" x2="19" y2="14.6"/><line x1="23" y1="14.6" x2="30.4" y2="14.6"/><line x1="11.8" y1="32.8" x2="19.6" y2="32.8"/></g></svg><svg class="b" style="left:2336.0px;top:730.0px;" width="40" height="40" viewBox="0 0 40 40"><circle cx="20" cy="20" r="19.5" fill="#23233c"/><circle cx="20" cy="20" r="18" fill="#d9233a"/><rect x="18" y="8.6" width="4" height="12" rx="2" fill="#fff"/><circle cx="20" cy="26.2" r="2.5" fill="#fff"/></svg><div class="t" style="left:2404.5px;top:744.8px;font-size:28px;line-height:28px;color:#ffffff;font-weight:700;letter-spacing:-0.6px;">Relay trip</div><div class="t" style="left:2404.5px;top:784.5px;font-size:28px;line-height:28px;color:#ffffff;letter-spacing:-0.8px;">Reyrolle_7SRS</div><div class="t" style="left:2404.5px;top:824.3px;font-size:28px;line-height:28px;color:#b4b4c4;letter-spacing:-0.8px;">Winter (Gethen) site</div><div class="b" style="left:2244.0px;top:885.0px;width:716.0px;height:2.0px;background:#4c4c66;"></div><div class="b" style="left:2276.0px;top:917.8px;width:80.0px;height:80.0px;border:2.2px solid #55556f;border-radius:50%;box-sizing:border-box;"></div><svg class="b" style="left:2292.0px;top:933.8px;" width="48" height="48" viewBox="0 0 48 48"><path d="M21 10.5v15.2h6.2v16" fill="none" stroke="#fff" stroke-width="2.6" stroke-linecap="round"/></svg><svg class="b" style="left:2336.0px;top:906.0px;" width="40" height="40" viewBox="0 0 40 40"><circle cx="20" cy="20" r="19.5" fill="#23233c"/><circle cx="20" cy="20" r="18" fill="#d9233a"/><rect x="18" y="8.6" width="4" height="12" rx="2" fill="#fff"/><circle cx="20" cy="26.2" r="2.5" fill="#fff"/></svg><div class="t" style="left:2404.5px;top:920.8px;font-size:28px;line-height:28px;color:#ffffff;font-weight:700;letter-spacing:-0.6px;">Fault</div><div class="t" style="left:2404.5px;top:960.5px;font-size:28px;line-height:28px;color:#ffffff;letter-spacing:-0.8px;">FPI 1</div><div class="t" style="left:2404.5px;top:1000.3px;font-size:28px;line-height:28px;color:#b4b4c4;letter-spacing:-0.8px;">Equus site</div><div class="b" style="left:2244.0px;top:1061.0px;width:716.0px;height:2.0px;background:#4c4c66;"></div><div class="b" style="left:2276.0px;top:1093.8px;width:80.0px;height:80.0px;border:2.2px solid #55556f;border-radius:50%;box-sizing:border-box;"></div><svg class="b" style="left:2292.0px;top:1109.8px;" width="48" height="48" viewBox="0 0 48 48"><g fill="none" stroke="#fff" stroke-width="2.6"><rect x="6.3" y="10.6" width="34.6" height="26.2" rx="4"/><line x1="6.3" y1="19.6" x2="40.9" y2="19.6"/><line x1="6.3" y1="28.8" x2="40.9" y2="28.8"/></g><g stroke="#fff" stroke-width="2.6" stroke-linecap="round"><line x1="11.8" y1="14.6" x2="19" y2="14.6"/><line x1="23" y1="14.6" x2="30.4" y2="14.6"/><line x1="11.8" y1="32.8" x2="19.6" y2="32.8"/></g></svg><svg class="b" style="left:2336.0px;top:554.0px;transform:translateY(528px);" width="40" height="38" viewBox="0 0 40 38"><path d="M16.8 3.8c1.4-2.4 4.6-2.4 6 0l14.6 25.4c1.4 2.4-.4 5.4-3 5.4H5.2c-2.6 0-4.4-3-3-5.4z" fill="#ff9000" transform="translate(0,0.6)"/><rect x="17.8" y="10.2" width="4" height="11.2" rx="2" fill="#000028"/><circle cx="19.8" cy="27" r="2.5" fill="#000028"/></svg><div class="t" style="left:2404.5px;top:1096.8px;font-size:28px;line-height:28px;color:#ffffff;font-weight:700;letter-spacing:-0.6px;">Remote code execution vulnerability</div><div class="t" style="left:2404.5px;top:1136.5px;font-size:28px;line-height:28px;color:#ffffff;letter-spacing:-0.8px;">Ruggedcom switch</div><div class="t" style="left:2404.5px;top:1176.3px;font-size:28px;line-height:28px;color:#b4b4c4;letter-spacing:-0.8px;">Gas Town site</div><div class="b" style="left:2244.0px;top:1237.0px;width:716.0px;height:2.0px;background:#4c4c66;"></div><div class="b" style="left:2276.0px;top:1269.8px;width:80.0px;height:80.0px;border:2.2px solid #55556f;border-radius:50%;box-sizing:border-box;"></div><svg class="b" style="left:2292.0px;top:1285.8px;" width="48" height="48" viewBox="0 0 48 48"><g fill="none" stroke="#fff" stroke-width="2.6" stroke-linejoin="miter"><rect x="12.4" y="10.4" width="22.8" height="30.6"/><path d="M12.4 10.4l14.2 5.4v29.2l-14.2-5.2z" fill="#23233c"/></g><rect x="19.8" y="25.4" width="2.2" height="5" rx="1.1" fill="#fff"/></svg><svg class="b" style="left:2336.0px;top:1258.0px;" width="40" height="40" viewBox="0 0 40 40"><circle cx="20" cy="20" r="19.5" fill="#23233c"/><circle cx="20" cy="20" r="18" fill="#d9233a"/><rect x="18" y="8.6" width="4" height="12" rx="2" fill="#fff"/><circle cx="20" cy="26.2" r="2.5" fill="#fff"/></svg><div class="t" style="left:2404.5px;top:1272.8px;font-size:28px;line-height:28px;color:#ffffff;font-weight:700;letter-spacing:-0.6px;">Door open</div><div class="t" style="left:2404.5px;top:1312.5px;font-size:28px;line-height:28px;color:#ffffff;letter-spacing:-0.8px;">FPI 1</div></div></div><div class="frame" style="left:110px;top:1506px;width:2940px;height:1334px;"><div class="off" style="left:-112px;top:-1508px;"><div class="b" style="left:112.0px;top:1508.0px;width:2940.0px;height:96.0px;background:#23233c;"></div><div class="b" style="left:112.0px;top:1604.0px;width:2940.0px;height:2.0px;background:#50506c;"></div><svg class="b" style="left:141.9px;top:1537.8px;" width="36" height="36" viewBox="0 0 36 36"><circle cx="4" cy="4" r="3.2" fill="#fff"/><circle cx="4" cy="18" r="3.2" fill="#fff"/><circle cx="4" cy="32" r="3.2" fill="#fff"/><circle cx="18" cy="4" r="3.2" fill="#fff"/><circle cx="18" cy="18" r="3.2" fill="#fff"/><circle cx="18" cy="32" r="3.2" fill="#fff"/><circle cx="32" cy="4" r="3.2" fill="#fff"/><circle cx="32" cy="18" r="3.2" fill="#fff"/><circle cx="32" cy="32" r="3.2" fill="#fff"/></svg><div class="t" style="left:239.0px;top:1532.6px;font-size:46px;line-height:46px;color:#ffffff;font-weight:700;letter-spacing:-0.4px;">SIEMENS</div><div class="t" style="left:498.5px;top:1541.2px;font-size:32px;line-height:32px;color:#ffffff;">Application name</div><div class="b" style="left:2971.0px;top:1524.0px;width:64.0px;height:64.0px;background:#9dcbff;border-radius:50%;"></div><div class="t" style="left:2971.0px;top:1540.1px;font-size:33px;line-height:33px;color:#000028;font-weight:700;letter-spacing:-0.6px;width:64px;text-align:center;text-indent:-0.6px;">JD</div><svg class="b" style="left:2885.3px;top:1534.0px;" width="44" height="44" viewBox="0 0 44 44"><circle cx="22" cy="22" r="16.5" fill="none" stroke="#fff" stroke-width="2.8"/><path d="M17.8 18.8c0-2.6 1.9-4.4 4.3-4.4s4.3 1.8 4.3 4c0 2.1-1.4 2.9-2.7 3.9-1 .7-1.6 1.3-1.6 2.6v1.1" fill="none" stroke="#fff" stroke-width="2.6" stroke-linecap="round"/><circle cx="22" cy="30.6" r="1.7" fill="#fff"/></svg><div class="t" style="left:177.5px;top:1641.1px;font-size:40px;line-height:40px;color:#ffffff;">Configuration</div><div class="b" style="left:176.0px;top:1732.0px;width:664.0px;height:1168.0px;background:#23233c;border-radius:8px 8px 0 0;"></div><div class="b" style="left:208.0px;top:1764.0px;width:600.0px;height:64.0px;background:#000028;border-radius:6px;"></div><svg class="b" style="left:218.5px;top:1774.0px;" width="40" height="40" viewBox="0 0 40 40"><circle cx="20" cy="20" r="12.2" fill="none" stroke="#7c7c92" stroke-width="2.6"/><line x1="28.8" y1="28.8" x2="37.2" y2="37.2" stroke="#7c7c92" stroke-width="2.6" stroke-linecap="round"/></svg><div class="t" style="left:273.0px;top:1784.3px;font-size:28px;line-height:28px;color:#a3a3b4;letter-spacing:-0.9px;">Search...</div><svg class="b" style="left:204.0px;top:1869.3px;" width="24" height="30" viewBox="0 0 24 30"><path d="M8.2 6.6l8.6 8.6-8.6 8.6" fill="none" stroke="#fff" stroke-width="2.6" stroke-linecap="round" stroke-linejoin="round"/></svg><div class="t" style="left:248.4px;top:1871.6px;font-size:28px;line-height:28px;color:#ffffff;letter-spacing:-0.8px;">Campus 1</div><svg class="b" style="left:204.0px;top:1949.3px;" width="24" height="30" viewBox="0 0 24 30"><path d="M8.2 6.6l8.6 8.6-8.6 8.6" fill="none" stroke="#fff" stroke-width="2.6" stroke-linecap="round" stroke-linejoin="round"/></svg><div class="t" style="left:248.4px;top:1951.6px;font-size:28px;line-height:28px;color:#ffffff;letter-spacing:-0.8px;">Campus 2</div><svg class="b" style="left:204.0px;top:2029.3px;" width="24" height="30" viewBox="0 0 24 30"><path d="M8.2 6.6l8.6 8.6-8.6 8.6" fill="none" stroke="#fff" stroke-width="2.6" stroke-linecap="round" stroke-linejoin="round"/></svg><div class="t" style="left:248.4px;top:2031.6px;font-size:28px;line-height:28px;color:#ffffff;letter-spacing:-0.8px;">Campus 3</div><svg class="b" style="left:204.0px;top:2109.3px;" width="24" height="30" viewBox="0 0 24 30"><path d="M8.2 6.6l8.6 8.6-8.6 8.6" fill="none" stroke="#fff" stroke-width="2.6" stroke-linecap="round" stroke-linejoin="round"/></svg><div class="t" style="left:248.4px;top:2111.6px;font-size:28px;line-height:28px;color:#ffffff;letter-spacing:-0.8px;">Campus 4</div><div class="b" style="left:176.0px;top:2244.0px;width:664.0px;height:80.0px;background:#3f3d5e;"></div><div class="t" style="left:273.0px;top:2190.3px;font-size:28px;line-height:28px;color:#ffffff;letter-spacing:-0.8px;">Meter 1</div><div class="t" style="left:273.0px;top:2270.3px;font-size:28px;line-height:28px;color:#ffffff;font-weight:700;letter-spacing:-0.6px;">Meter 2</div><div class="t" style="left:273.0px;top:2350.3px;font-size:28px;line-height:28px;color:#ffffff;letter-spacing:-0.8px;">Meter 3</div><div class="t" style="left:273.0px;top:2430.3px;font-size:28px;line-height:28px;color:#ffffff;letter-spacing:-0.8px;">Meter 4</div><div class="t" style="left:884.0px;top:1759.9px;font-size:28px;line-height:28px;color:#ffffff;font-weight:700;letter-spacing:-0.6px;">Calorific values</div><svg class="b" style="left:2926.0px;top:1759.6px;" width="44" height="30" viewBox="0 0 44 30"><path d="M12.6 11.9L22 2.9l9.4 9M11.6 21.4L22 10.9l10.4 10.5" fill="none" stroke="#00c8cc" stroke-width="2.3" stroke-linecap="butt"/></svg><div class="b" style="left:872.0px;top:1812.4px;width:1804.0px;height:64.0px;background:#23233c;border-radius:6px;"></div><svg class="b" style="left:882.5px;top:1822.4px;" width="40" height="40" viewBox="0 0 40 40"><circle cx="20" cy="20" r="12.2" fill="none" stroke="#7c7c92" stroke-width="2.6"/><line x1="28.8" y1="28.8" x2="37.2" y2="37.2" stroke="#7c7c92" stroke-width="2.6" stroke-linecap="round"/></svg><div class="t" style="left:937.0px;top:1832.7px;font-size:28px;line-height:28px;color:#a3a3b4;letter-spacing:-0.9px;">Search...</div><svg class="b" style="left:2712.0px;top:1824.4px;" width="40" height="40" viewBox="0 0 40 40"><g stroke="#00c8cc" stroke-width="2.4" fill="none"><line x1="5.6" y1="9.4" x2="34.6" y2="9.4"/><line x1="5.6" y1="19.7" x2="34.6" y2="19.7"/><line x1="5.6" y1="30.2" x2="34.6" y2="30.2"/></g><g stroke="#00c8cc" stroke-width="2.4" fill="#000028"><circle cx="25.7" cy="9.4" r="3.6"/><circle cx="13.8" cy="19.7" r="3.6"/><circle cx="25.7" cy="30.2" r="3.6"/></g></svg><div class="b" style="left:2787.0px;top:1811.4px;width:202.0px;height:66.0px;border:2.4px solid #00c8cc;border-radius:5px;box-sizing:border-box;"></div><div class="t" style="left:2787.0px;top:1831.1px;font-size:28px;line-height:28px;color:#00c8cc;font-weight:700;letter-spacing:-0.5px;width:202px;text-align:center;">Create</div><div class="b" style="left:872.0px;top:1908.0px;width:2116.0px;height:527.5px;background:#23233c;border-radius:8px;overflow:hidden;"></div><div class="b" style="left:872.0px;top:1982.0px;width:2116.0px;height:6.0px;background:#4f4f68;"></div><div class="t" style="left:928.6px;top:1931.5px;font-size:28px;line-height:28px;color:#ffffff;font-weight:700;letter-spacing:-0.6px;">Consumption group</div><div class="t" style="left:1339.0px;top:1931.5px;font-size:28px;line-height:28px;color:#ffffff;font-weight:700;letter-spacing:-0.6px;">Base unit</div><div class="t" style="left:1749.0px;top:1931.5px;font-size:28px;line-height:28px;color:#ffffff;font-weight:700;letter-spacing:-0.6px;">Target unit</div><div class="t" style="left:528.4px;width:2000px;text-align:right;top:1931.5px;font-size:28px;line-height:28px;color:#ffffff;font-weight:700;letter-spacing:-0.6px;">Heating value</div><div class="t" style="left:2570.0px;top:1931.5px;font-size:28px;line-height:28px;color:#ffffff;font-weight:700;letter-spacing:-0.6px;">Gaseous</div><svg class="b" style="left:1196.0px;top:1933.2px;" width="40" height="24" viewBox="0 0 40 24"><g stroke="#fff" stroke-width="2.2" fill="none" stroke-linecap="round"><path d="M2.6 8.4L8.8 2.2 15 8.4M8.8 2.6V19.6"/></g><g stroke="#d0d0d8" stroke-width="2.2"><line x1="19.2" y1="3.4" x2="34" y2="3.4"/><line x1="19.2" y1="10.2" x2="30" y2="10.2"/><line x1="19.2" y1="17.2" x2="27" y2="17.2"/></g></svg><div class="clip" style="left:872px;top:1908px;width:2116px;height:527.5px;"><div class="off" style="left:-872px;top:-1908px;"><div class="t" style="left:928.6px;top:2023.9px;font-size:28px;line-height:28px;color:#ffffff;font-weight:700;letter-spacing:-0.6px;">Heating</div><div class="t" style="left:928.6px;top:2054.9px;font-size:28px;line-height:28px;color:#b4b4c4;letter-spacing:-0.8px;">Bio gas</div><div class="t" style="left:1339.0px;top:2038.3px;font-size:28px;line-height:28px;color:#ffffff;letter-spacing:-0.8px;">m³</div><div class="t" style="left:1749.0px;top:2038.3px;font-size:28px;line-height:28px;color:#ffffff;letter-spacing:-0.8px;">kWh</div><div class="t" style="left:519.5px;width:2000px;text-align:right;top:2038.3px;font-size:28px;line-height:28px;color:#ffffff;letter-spacing:-0.8px;">6.433 kWh/m³</div><div class="t" style="left:2570.0px;top:2038.3px;font-size:28px;line-height:28px;color:#ffffff;letter-spacing:-0.8px;">Yes</div></div></div><div class="b" style="left:872.0px;top:2114.0px;width:2116.0px;height:2.0px;background:#4e4e67;"></div><div class="clip" style="left:872px;top:1908px;width:2116px;height:527.5px;"><div class="off" style="left:-872px;top:-1908px;"><div class="t" style="left:928.6px;top:2151.9px;font-size:28px;line-height:28px;color:#ffffff;font-weight:700;letter-spacing:-0.6px;">Heating</div><div class="t" style="left:928.6px;top:2182.9px;font-size:28px;line-height:28px;color:#b4b4c4;letter-spacing:-0.8px;">Bio oil</div><div class="t" style="left:1339.0px;top:2166.3px;font-size:28px;line-height:28px;color:#ffffff;letter-spacing:-0.8px;">l</div><div class="t" style="left:1749.0px;top:2166.3px;font-size:28px;line-height:28px;color:#ffffff;letter-spacing:-0.8px;">kWh</div><div class="t" style="left:519.5px;width:2000px;text-align:right;top:2166.3px;font-size:28px;line-height:28px;color:#ffffff;letter-spacing:-0.8px;">9.8 kWh/l</div><div class="t" style="left:2570.0px;top:2166.3px;font-size:28px;line-height:28px;color:#ffffff;letter-spacing:-0.8px;">Yes</div></div></div><div class="b" style="left:872.0px;top:2242.0px;width:2116.0px;height:2.0px;background:#4e4e67;"></div><div class="clip" style="left:872px;top:1908px;width:2116px;height:527.5px;"><div class="off" style="left:-872px;top:-1908px;"><div class="t" style="left:928.6px;top:2279.9px;font-size:28px;line-height:28px;color:#ffffff;font-weight:700;letter-spacing:-0.6px;">Heating</div><div class="t" style="left:928.6px;top:2310.9px;font-size:28px;line-height:28px;color:#b4b4c4;letter-spacing:-0.8px;">Diesel</div><div class="t" style="left:1339.0px;top:2294.3px;font-size:28px;line-height:28px;color:#ffffff;letter-spacing:-0.8px;">Kg</div><div class="t" style="left:1749.0px;top:2294.3px;font-size:28px;line-height:28px;color:#ffffff;letter-spacing:-0.8px;">kWh</div><div class="t" style="left:519.5px;width:2000px;text-align:right;top:2294.3px;font-size:28px;line-height:28px;color:#ffffff;letter-spacing:-0.8px;">11.8 kWh/kg</div><div class="t" style="left:2570.0px;top:2294.3px;font-size:28px;line-height:28px;color:#ffffff;letter-spacing:-0.8px;">Yes</div></div></div><div class="b" style="left:872.0px;top:2370.0px;width:2116.0px;height:2.0px;background:#4e4e67;"></div><div class="clip" style="left:872px;top:1908px;width:2116px;height:527.5px;"><div class="off" style="left:-872px;top:-1908px;"><div class="t" style="left:928.6px;top:2407.9px;font-size:28px;line-height:28px;color:#ffffff;font-weight:700;letter-spacing:-0.6px;">Heating</div><div class="t" style="left:928.6px;top:2438.9px;font-size:28px;line-height:28px;color:#b4b4c4;letter-spacing:-0.8px;">Bio gas</div><div class="t" style="left:1339.0px;top:2422.3px;font-size:28px;line-height:28px;color:#ffffff;letter-spacing:-0.8px;">m³</div><div class="t" style="left:1749.0px;top:2422.3px;font-size:28px;line-height:28px;color:#ffffff;letter-spacing:-0.8px;">kWh</div><div class="t" style="left:519.5px;width:2000px;text-align:right;top:2422.3px;font-size:28px;line-height:28px;color:#ffffff;letter-spacing:-0.8px;">6.433 kWh/m³</div><div class="t" style="left:2570.0px;top:2422.3px;font-size:28px;line-height:28px;color:#ffffff;letter-spacing:-0.8px;">No</div></div></div><div class="b" style="left:1890.0px;top:2446.0px;width:80.0px;height:12.0px;background:#9d9db0;border-radius:6px;"></div><div class="t" style="left:884.0px;top:2494.8px;font-size:28px;line-height:28px;color:#ffffff;font-weight:700;letter-spacing:-0.6px;">Tarifs</div><svg class="b" style="left:2926.0px;top:2494.5px;" width="44" height="30" viewBox="0 0 44 30"><path d="M12.6 11.9L22 2.9l9.4 9M11.6 21.4L22 10.9l10.4 10.5" fill="none" stroke="#00c8cc" stroke-width="2.3" stroke-linecap="butt"/></svg><div class="b" style="left:872.0px;top:2547.3px;width:1804.0px;height:64.0px;background:#23233c;border-radius:6px;"></div><svg class="b" style="left:882.5px;top:2557.3px;" width="40" height="40" viewBox="0 0 40 40"><circle cx="20" cy="20" r="12.2" fill="none" stroke="#7c7c92" stroke-width="2.6"/><line x1="28.8" y1="28.8" x2="37.2" y2="37.2" stroke="#7c7c92" stroke-width="2.6" stroke-linecap="round"/></svg><div class="t" style="left:937.0px;top:2567.6px;font-size:28px;line-height:28px;color:#a3a3b4;letter-spacing:-0.9px;">Search...</div><svg class="b" style="left:2712.0px;top:2559.3px;" width="40" height="40" viewBox="0 0 40 40"><g stroke="#00c8cc" stroke-width="2.4" fill="none"><line x1="5.6" y1="9.4" x2="34.6" y2="9.4"/><line x1="5.6" y1="19.7" x2="34.6" y2="19.7"/><line x1="5.6" y1="30.2" x2="34.6" y2="30.2"/></g><g stroke="#00c8cc" stroke-width="2.4" fill="#000028"><circle cx="25.7" cy="9.4" r="3.6"/><circle cx="13.8" cy="19.7" r="3.6"/><circle cx="25.7" cy="30.2" r="3.6"/></g></svg><div class="b" style="left:2787.0px;top:2546.3px;width:202.0px;height:66.0px;border:2.4px solid #00c8cc;border-radius:5px;box-sizing:border-box;"></div><div class="t" style="left:2787.0px;top:2566.0px;font-size:28px;line-height:28px;color:#00c8cc;font-weight:700;letter-spacing:-0.5px;width:202px;text-align:center;">Create</div><div class="b" style="left:872.0px;top:2644.0px;width:2116.0px;height:256.0px;background:#23233c;border-radius:8px;overflow:hidden;"></div><div class="b" style="left:872.0px;top:2718.0px;width:2116.0px;height:6.0px;background:#4f4f68;"></div><div class="t" style="left:928.6px;top:2667.5px;font-size:28px;line-height:28px;color:#ffffff;font-weight:700;letter-spacing:-0.6px;">Consumption group</div><div class="t" style="left:1404.5px;top:2667.5px;font-size:28px;line-height:28px;color:#ffffff;font-weight:700;letter-spacing:-0.6px;">Unit</div><div class="t" style="left:412.3px;width:2000px;text-align:right;top:2667.5px;font-size:28px;line-height:28px;color:#ffffff;font-weight:700;letter-spacing:-0.6px;">Price per unit (€)</div><div class="t" style="left:2455.0px;top:2667.5px;font-size:28px;line-height:28px;color:#ffffff;font-weight:700;letter-spacing:-0.6px;">Annual fixed cost</div><svg class="b" style="left:1196.0px;top:2669.2px;" width="40" height="24" viewBox="0 0 40 24"><g stroke="#fff" stroke-width="2.2" fill="none" stroke-linecap="round"><path d="M2.6 8.4L8.8 2.2 15 8.4M8.8 2.6V19.6"/></g><g stroke="#d0d0d8" stroke-width="2.2"><line x1="19.2" y1="3.4" x2="34" y2="3.4"/><line x1="19.2" y1="10.2" x2="30" y2="10.2"/><line x1="19.2" y1="17.2" x2="27" y2="17.2"/></g></svg><div class="clip" style="left:872px;top:2644px;width:2116px;height:256px;"><div class="off" style="left:-872px;top:-2644px;"><div class="t" style="left:928.6px;top:2759.9px;font-size:28px;line-height:28px;color:#ffffff;font-weight:700;letter-spacing:-0.6px;">Compressed air</div><div class="t" style="left:928.6px;top:2790.9px;font-size:28px;line-height:28px;color:#b4b4c4;letter-spacing:-0.8px;">Compressed air</div><div class="t" style="left:1404.5px;top:2774.3px;font-size:28px;line-height:28px;color:#ffffff;letter-spacing:-0.8px;">kWh</div><div class="t" style="left:405.6px;width:2000px;text-align:right;top:2774.3px;font-size:28px;line-height:28px;color:#ffffff;letter-spacing:-0.8px;">45.00</div><div class="t" style="left:2455.0px;top:2774.3px;font-size:28px;line-height:28px;color:#ffffff;letter-spacing:-0.8px;">Text</div></div></div><div class="b" style="left:872.0px;top:2850.0px;width:2116.0px;height:2.0px;background:#4e4e67;"></div></div></div>
</body></html>
